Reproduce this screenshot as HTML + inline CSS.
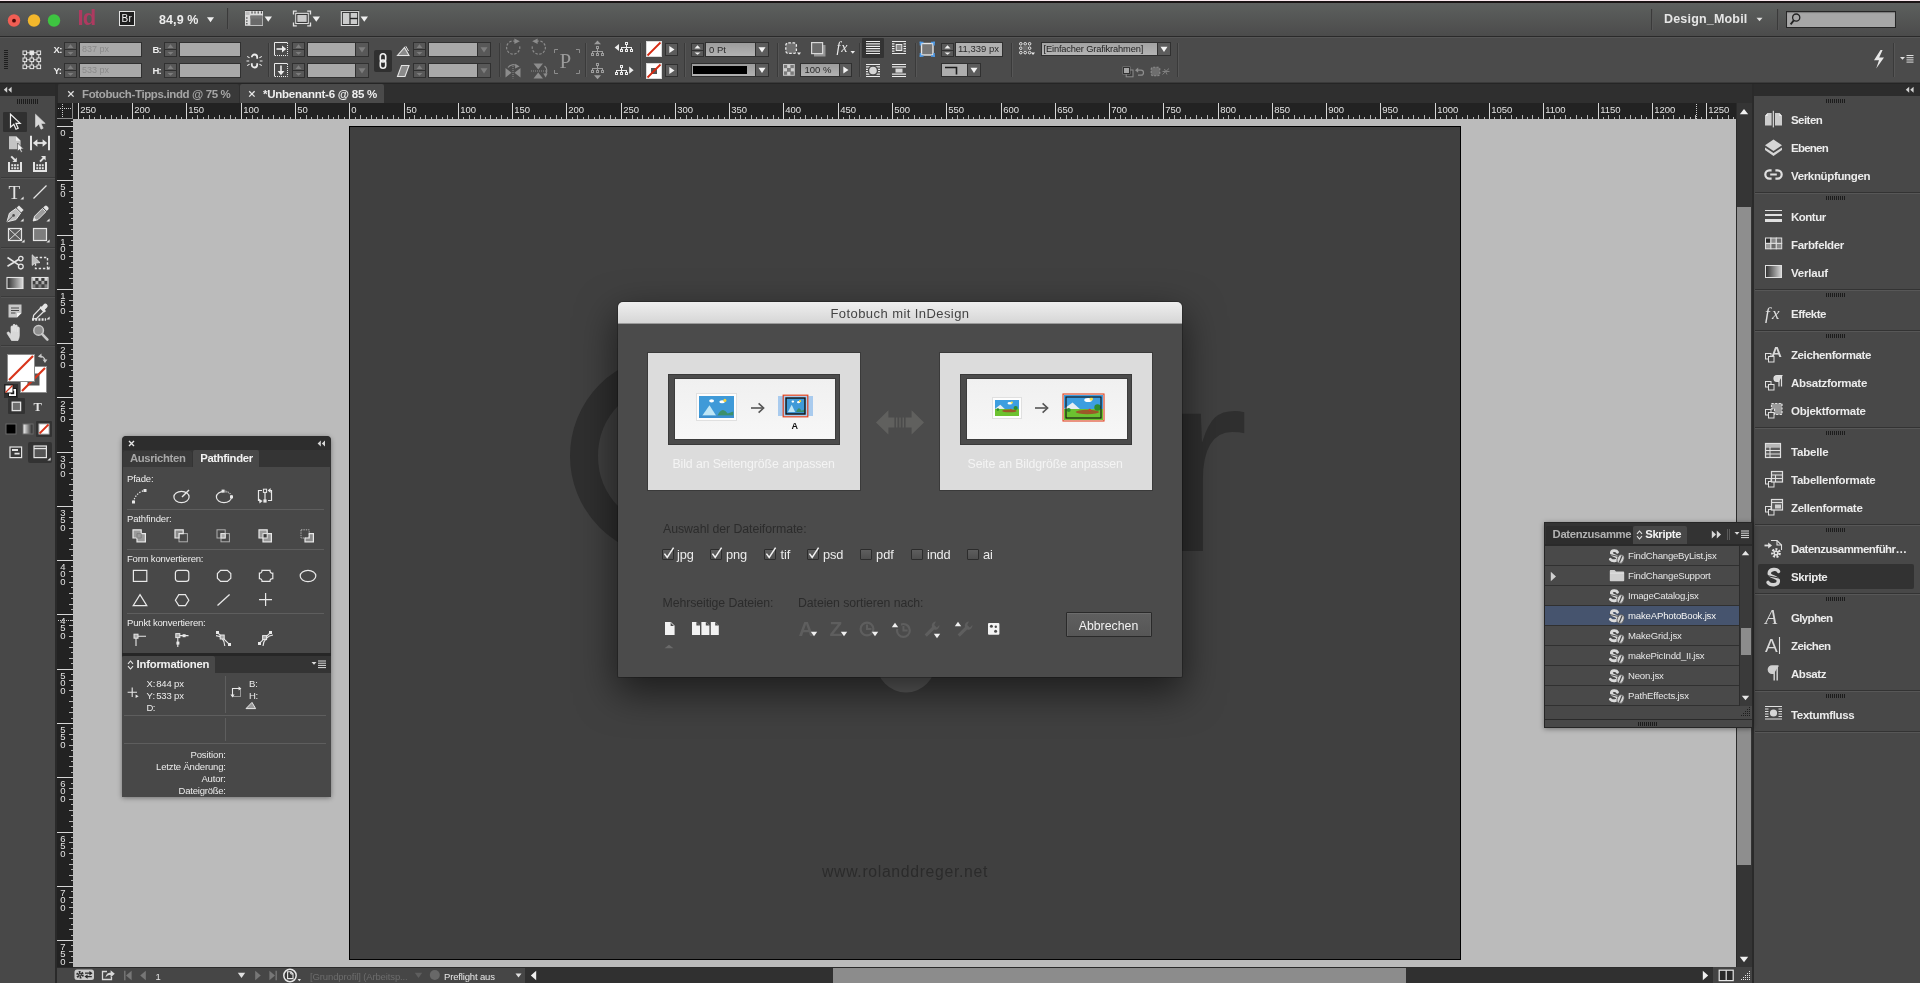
<!DOCTYPE html>
<html><head><meta charset="utf-8"><title>InDesign</title>
<style>
html,body{margin:0;padding:0}
body{width:1920px;height:983px;overflow:hidden;position:relative;background:#484848;font-family:"Liberation Sans",sans-serif}
body div,body span,body svg{position:absolute;box-sizing:border-box}
body span{white-space:pre;line-height:1}
#root{left:0;top:0;width:1920px;height:983px;overflow:hidden;will-change:transform}
</style></head><body><div id="root">
<div style="left:0px;top:0px;width:1920px;height:1px;background:#fbe9ee;"></div>
<div style="left:0px;top:1px;width:1920px;height:2px;background:#1b1415;"></div>
<div style="left:0px;top:3px;width:1920px;height:33px;background:linear-gradient(#5d605e,#4b4b4b);"></div>
<div style="left:0px;top:36px;width:1920px;height:1px;background:#2a2a2a;"></div>
<div style="left:0px;top:37px;width:1920px;height:46px;background:#4b4b4b;"></div>
<div style="left:0px;top:37px;width:1920px;height:1px;background:#565656;"></div>
<div style="left:0px;top:82px;width:1920px;height:1px;background:#3a3a3a;"></div>
<div style="left:0px;top:83px;width:1920px;height:1px;background:#252525;"></div>
<div style="left:0px;top:84px;width:1920px;height:19px;background:#2f2f2f;"></div>
<div style="left:0px;top:84px;width:55px;height:12px;background:#2c2c2c;"></div>
<div style="left:0px;top:96px;width:55px;height:887px;background:#484848;"></div>
<div style="left:55px;top:84px;width:3px;height:899px;background:#2a2a2a;"></div>
<div style="left:58px;top:84px;width:181px;height:19px;background:#393939;border-radius:2px 2px 0 0"></div>
<div style="left:240px;top:84px;width:144px;height:19px;background:#4a4a4a;border-radius:2px 2px 0 0"></div>
<div style="left:57px;top:103px;width:1679px;height:16px;background:#222222;"></div>
<div style="left:57px;top:119px;width:16px;height:848px;background:#222222;"></div>
<div style="left:73px;top:119px;width:1663px;height:848px;background:#bbbbbb;"></div>
<div style="left:349px;top:126px;width:1112px;height:834px;background:#404040;border:1px solid #000"></div>
<div style="left:1736px;top:103px;width:16px;height:864px;background:#353535;border-left:1px solid #2a2a2a"></div>
<div style="left:1737px;top:207px;width:14px;height:658px;background:#8e8e8e;"></div>
<div style="left:57px;top:967px;width:1695px;height:16px;background:#333333;"></div>
<div style="left:833px;top:968px;width:573px;height:15px;background:#8c8c8c;"></div>
<div style="left:1752px;top:84px;width:2px;height:899px;background:#2a2a2a;"></div>
<div style="left:1754px;top:84px;width:166px;height:12px;background:#2c2c2c;"></div>
<div style="left:1754px;top:96px;width:166px;height:887px;background:#484848;"></div>
<svg style="left:57px;top:103px;" width="1680" height="16" viewBox="0 0 1680 16"><g stroke="#d6d6d6" stroke-width="1" fill="none"><path d="M21.5 0V16"/><path d="M75.5 0V16"/><path d="M129.5 0V16"/><path d="M184.5 0V16"/><path d="M238.5 0V16"/><path d="M292.5 0V16"/><path d="M347.5 0V16"/><path d="M401.5 0V16"/><path d="M455.5 0V16"/><path d="M509.5 0V16"/><path d="M564.5 0V16"/><path d="M618.5 0V16"/><path d="M672.5 0V16"/><path d="M726.5 0V16"/><path d="M781.5 0V16"/><path d="M835.5 0V16"/><path d="M889.5 0V16"/><path d="M944.5 0V16"/><path d="M998.5 0V16"/><path d="M1052.5 0V16"/><path d="M1106.5 0V16"/><path d="M1161.5 0V16"/><path d="M1215.5 0V16"/><path d="M1269.5 0V16"/><path d="M1323.5 0V16"/><path d="M1378.5 0V16"/><path d="M1432.5 0V16"/><path d="M1486.5 0V16"/><path d="M1541.5 0V16"/><path d="M1595.5 0V16"/><path d="M1649.5 0V16"/></g><g stroke="#b4b4b4" stroke-width="1" fill="none"><path d="M26.5 14V16"/><path d="M32.5 12V16"/><path d="M37.5 14V16"/><path d="M43.5 12V16"/><path d="M48.5 14V16"/><path d="M54.5 12V16"/><path d="M59.5 14V16"/><path d="M64.5 12V16"/><path d="M70.5 14V16"/><path d="M81.5 14V16"/><path d="M86.5 12V16"/><path d="M92.5 14V16"/><path d="M97.5 12V16"/><path d="M102.5 14V16"/><path d="M108.5 12V16"/><path d="M113.5 14V16"/><path d="M119.5 12V16"/><path d="M124.5 14V16"/><path d="M135.5 14V16"/><path d="M140.5 12V16"/><path d="M146.5 14V16"/><path d="M151.5 12V16"/><path d="M157.5 14V16"/><path d="M162.5 12V16"/><path d="M167.5 14V16"/><path d="M173.5 12V16"/><path d="M178.5 14V16"/><path d="M189.5 14V16"/><path d="M195.5 12V16"/><path d="M200.5 14V16"/><path d="M205.5 12V16"/><path d="M211.5 14V16"/><path d="M216.5 12V16"/><path d="M222.5 14V16"/><path d="M227.5 12V16"/><path d="M233.5 14V16"/><path d="M243.5 14V16"/><path d="M249.5 12V16"/><path d="M254.5 14V16"/><path d="M260.5 12V16"/><path d="M265.5 14V16"/><path d="M271.5 12V16"/><path d="M276.5 14V16"/><path d="M281.5 12V16"/><path d="M287.5 14V16"/><path d="M298.5 14V16"/><path d="M303.5 12V16"/><path d="M309.5 14V16"/><path d="M314.5 12V16"/><path d="M319.5 14V16"/><path d="M325.5 12V16"/><path d="M330.5 14V16"/><path d="M336.5 12V16"/><path d="M341.5 14V16"/><path d="M352.5 14V16"/><path d="M357.5 12V16"/><path d="M363.5 14V16"/><path d="M368.5 12V16"/><path d="M374.5 14V16"/><path d="M379.5 12V16"/><path d="M385.5 14V16"/><path d="M390.5 12V16"/><path d="M395.5 14V16"/><path d="M406.5 14V16"/><path d="M412.5 12V16"/><path d="M417.5 14V16"/><path d="M423.5 12V16"/><path d="M428.5 14V16"/><path d="M433.5 12V16"/><path d="M439.5 14V16"/><path d="M444.5 12V16"/><path d="M450.5 14V16"/><path d="M461.5 14V16"/><path d="M466.5 12V16"/><path d="M471.5 14V16"/><path d="M477.5 12V16"/><path d="M482.5 14V16"/><path d="M488.5 12V16"/><path d="M493.5 14V16"/><path d="M499.5 12V16"/><path d="M504.5 14V16"/><path d="M515.5 14V16"/><path d="M520.5 12V16"/><path d="M526.5 14V16"/><path d="M531.5 12V16"/><path d="M537.5 14V16"/><path d="M542.5 12V16"/><path d="M547.5 14V16"/><path d="M553.5 12V16"/><path d="M558.5 14V16"/><path d="M569.5 14V16"/><path d="M575.5 12V16"/><path d="M580.5 14V16"/><path d="M585.5 12V16"/><path d="M591.5 14V16"/><path d="M596.5 12V16"/><path d="M602.5 14V16"/><path d="M607.5 12V16"/><path d="M612.5 14V16"/><path d="M623.5 14V16"/><path d="M629.5 12V16"/><path d="M634.5 14V16"/><path d="M640.5 12V16"/><path d="M645.5 14V16"/><path d="M650.5 12V16"/><path d="M656.5 14V16"/><path d="M661.5 12V16"/><path d="M667.5 14V16"/><path d="M678.5 14V16"/><path d="M683.5 12V16"/><path d="M688.5 14V16"/><path d="M694.5 12V16"/><path d="M699.5 14V16"/><path d="M705.5 12V16"/><path d="M710.5 14V16"/><path d="M716.5 12V16"/><path d="M721.5 14V16"/><path d="M732.5 14V16"/><path d="M737.5 12V16"/><path d="M743.5 14V16"/><path d="M748.5 12V16"/><path d="M754.5 14V16"/><path d="M759.5 12V16"/><path d="M764.5 14V16"/><path d="M770.5 12V16"/><path d="M775.5 14V16"/><path d="M786.5 14V16"/><path d="M792.5 12V16"/><path d="M797.5 14V16"/><path d="M802.5 12V16"/><path d="M808.5 14V16"/><path d="M813.5 12V16"/><path d="M819.5 14V16"/><path d="M824.5 12V16"/><path d="M830.5 14V16"/><path d="M840.5 14V16"/><path d="M846.5 12V16"/><path d="M851.5 14V16"/><path d="M857.5 12V16"/><path d="M862.5 14V16"/><path d="M868.5 12V16"/><path d="M873.5 14V16"/><path d="M878.5 12V16"/><path d="M884.5 14V16"/><path d="M895.5 14V16"/><path d="M900.5 12V16"/><path d="M906.5 14V16"/><path d="M911.5 12V16"/><path d="M916.5 14V16"/><path d="M922.5 12V16"/><path d="M927.5 14V16"/><path d="M933.5 12V16"/><path d="M938.5 14V16"/><path d="M949.5 14V16"/><path d="M954.5 12V16"/><path d="M960.5 14V16"/><path d="M965.5 12V16"/><path d="M971.5 14V16"/><path d="M976.5 12V16"/><path d="M982.5 14V16"/><path d="M987.5 12V16"/><path d="M992.5 14V16"/><path d="M1003.5 14V16"/><path d="M1009.5 12V16"/><path d="M1014.5 14V16"/><path d="M1020.5 12V16"/><path d="M1025.5 14V16"/><path d="M1030.5 12V16"/><path d="M1036.5 14V16"/><path d="M1041.5 12V16"/><path d="M1047.5 14V16"/><path d="M1058.5 14V16"/><path d="M1063.5 12V16"/><path d="M1068.5 14V16"/><path d="M1074.5 12V16"/><path d="M1079.5 14V16"/><path d="M1085.5 12V16"/><path d="M1090.5 14V16"/><path d="M1095.5 12V16"/><path d="M1101.5 14V16"/><path d="M1112.5 14V16"/><path d="M1117.5 12V16"/><path d="M1123.5 14V16"/><path d="M1128.5 12V16"/><path d="M1133.5 14V16"/><path d="M1139.5 12V16"/><path d="M1144.5 14V16"/><path d="M1150.5 12V16"/><path d="M1155.5 14V16"/><path d="M1166.5 14V16"/><path d="M1171.5 12V16"/><path d="M1177.5 14V16"/><path d="M1182.5 12V16"/><path d="M1188.5 14V16"/><path d="M1193.5 12V16"/><path d="M1199.5 14V16"/><path d="M1204.5 12V16"/><path d="M1209.5 14V16"/><path d="M1220.5 14V16"/><path d="M1226.5 12V16"/><path d="M1231.5 14V16"/><path d="M1237.5 12V16"/><path d="M1242.5 14V16"/><path d="M1247.5 12V16"/><path d="M1253.5 14V16"/><path d="M1258.5 12V16"/><path d="M1264.5 14V16"/><path d="M1275.5 14V16"/><path d="M1280.5 12V16"/><path d="M1285.5 14V16"/><path d="M1291.5 12V16"/><path d="M1296.5 14V16"/><path d="M1302.5 12V16"/><path d="M1307.5 14V16"/><path d="M1313.5 12V16"/><path d="M1318.5 14V16"/><path d="M1329.5 14V16"/><path d="M1334.5 12V16"/><path d="M1340.5 14V16"/><path d="M1345.5 12V16"/><path d="M1351.5 14V16"/><path d="M1356.5 12V16"/><path d="M1361.5 14V16"/><path d="M1367.5 12V16"/><path d="M1372.5 14V16"/><path d="M1383.5 14V16"/><path d="M1389.5 12V16"/><path d="M1394.5 14V16"/><path d="M1399.5 12V16"/><path d="M1405.5 14V16"/><path d="M1410.5 12V16"/><path d="M1416.5 14V16"/><path d="M1421.5 12V16"/><path d="M1427.5 14V16"/><path d="M1437.5 14V16"/><path d="M1443.5 12V16"/><path d="M1448.5 14V16"/><path d="M1454.5 12V16"/><path d="M1459.5 14V16"/><path d="M1465.5 12V16"/><path d="M1470.5 14V16"/><path d="M1475.5 12V16"/><path d="M1481.5 14V16"/><path d="M1492.5 14V16"/><path d="M1497.5 12V16"/><path d="M1503.5 14V16"/><path d="M1508.5 12V16"/><path d="M1513.5 14V16"/><path d="M1519.5 12V16"/><path d="M1524.5 14V16"/><path d="M1530.5 12V16"/><path d="M1535.5 14V16"/><path d="M1546.5 14V16"/><path d="M1551.5 12V16"/><path d="M1557.5 14V16"/><path d="M1562.5 12V16"/><path d="M1568.5 14V16"/><path d="M1573.5 12V16"/><path d="M1578.5 14V16"/><path d="M1584.5 12V16"/><path d="M1589.5 14V16"/><path d="M1600.5 14V16"/><path d="M1606.5 12V16"/><path d="M1611.5 14V16"/><path d="M1616.5 12V16"/><path d="M1622.5 14V16"/><path d="M1627.5 12V16"/><path d="M1633.5 14V16"/><path d="M1638.5 12V16"/><path d="M1644.5 14V16"/><path d="M1654.5 14V16"/><path d="M1660.5 12V16"/><path d="M1665.5 14V16"/><path d="M1671.5 12V16"/><path d="M1676.5 14V16"/></g></svg>
<span style="left:80.20px;top:105.16px;font-size:9.5px;color:#e2e2e2;">250</span>
<span style="left:134.20px;top:105.16px;font-size:9.5px;color:#e2e2e2;">200</span>
<span style="left:188.20px;top:105.16px;font-size:9.5px;color:#e2e2e2;">150</span>
<span style="left:243.20px;top:105.16px;font-size:9.5px;color:#e2e2e2;">100</span>
<span style="left:297.20px;top:105.16px;font-size:9.5px;color:#e2e2e2;">50</span>
<span style="left:351.20px;top:105.16px;font-size:9.5px;color:#e2e2e2;">0</span>
<span style="left:406.20px;top:105.16px;font-size:9.5px;color:#e2e2e2;">50</span>
<span style="left:460.20px;top:105.16px;font-size:9.5px;color:#e2e2e2;">100</span>
<span style="left:514.20px;top:105.16px;font-size:9.5px;color:#e2e2e2;">150</span>
<span style="left:568.20px;top:105.16px;font-size:9.5px;color:#e2e2e2;">200</span>
<span style="left:623.20px;top:105.16px;font-size:9.5px;color:#e2e2e2;">250</span>
<span style="left:677.20px;top:105.16px;font-size:9.5px;color:#e2e2e2;">300</span>
<span style="left:731.20px;top:105.16px;font-size:9.5px;color:#e2e2e2;">350</span>
<span style="left:785.20px;top:105.16px;font-size:9.5px;color:#e2e2e2;">400</span>
<span style="left:840.20px;top:105.16px;font-size:9.5px;color:#e2e2e2;">450</span>
<span style="left:894.20px;top:105.16px;font-size:9.5px;color:#e2e2e2;">500</span>
<span style="left:948.20px;top:105.16px;font-size:9.5px;color:#e2e2e2;">550</span>
<span style="left:1003.20px;top:105.16px;font-size:9.5px;color:#e2e2e2;">600</span>
<span style="left:1057.20px;top:105.16px;font-size:9.5px;color:#e2e2e2;">650</span>
<span style="left:1111.20px;top:105.16px;font-size:9.5px;color:#e2e2e2;">700</span>
<span style="left:1165.20px;top:105.16px;font-size:9.5px;color:#e2e2e2;">750</span>
<span style="left:1220.20px;top:105.16px;font-size:9.5px;color:#e2e2e2;">800</span>
<span style="left:1274.20px;top:105.16px;font-size:9.5px;color:#e2e2e2;">850</span>
<span style="left:1328.20px;top:105.16px;font-size:9.5px;color:#e2e2e2;">900</span>
<span style="left:1382.20px;top:105.16px;font-size:9.5px;color:#e2e2e2;">950</span>
<span style="left:1437.20px;top:105.16px;font-size:9.5px;color:#e2e2e2;">1000</span>
<span style="left:1491.20px;top:105.16px;font-size:9.5px;color:#e2e2e2;">1050</span>
<span style="left:1545.20px;top:105.16px;font-size:9.5px;color:#e2e2e2;">1100</span>
<span style="left:1600.20px;top:105.16px;font-size:9.5px;color:#e2e2e2;">1150</span>
<span style="left:1654.20px;top:105.16px;font-size:9.5px;color:#e2e2e2;">1200</span>
<span style="left:1708.20px;top:105.16px;font-size:9.5px;color:#e2e2e2;">1250</span>
<svg style="left:57px;top:103px;" width="16" height="16" viewBox="0 0 16 16"><g stroke="#cfcfcf" stroke-width="1" stroke-dasharray="1 1" fill="none"><path d="M5.5 1V15"/><path d="M1 5.5H15"/></g></svg>
<div style="left:72px;top:103px;width:1px;height:16px;background:#8a8a8a;"></div>
<div style="left:57px;top:118px;width:16px;height:1px;background:#8a8a8a;"></div>
<svg style="left:57px;top:119px;" width="16" height="848" viewBox="0 0 16 848"><g stroke="#d6d6d6" stroke-width="1" fill="none"><path d="M0 7.5H16"/><path d="M0 61.5H16"/><path d="M0 116.5H16"/><path d="M0 170.5H16"/><path d="M0 224.5H16"/><path d="M0 278.5H16"/><path d="M0 333.5H16"/><path d="M0 387.5H16"/><path d="M0 441.5H16"/><path d="M0 495.5H16"/><path d="M0 550.5H16"/><path d="M0 604.5H16"/><path d="M0 658.5H16"/><path d="M0 713.5H16"/><path d="M0 767.5H16"/><path d="M0 821.5H16"/></g><g stroke="#b4b4b4" stroke-width="1" fill="none"><path d="M14 2.5H16"/><path d="M14 12.5H16"/><path d="M12 18.5H16"/><path d="M14 23.5H16"/><path d="M12 29.5H16"/><path d="M14 34.5H16"/><path d="M12 40.5H16"/><path d="M14 45.5H16"/><path d="M12 50.5H16"/><path d="M14 56.5H16"/><path d="M14 67.5H16"/><path d="M12 72.5H16"/><path d="M14 78.5H16"/><path d="M12 83.5H16"/><path d="M14 88.5H16"/><path d="M12 94.5H16"/><path d="M14 99.5H16"/><path d="M12 105.5H16"/><path d="M14 110.5H16"/><path d="M14 121.5H16"/><path d="M12 126.5H16"/><path d="M14 132.5H16"/><path d="M12 137.5H16"/><path d="M14 143.5H16"/><path d="M12 148.5H16"/><path d="M14 154.5H16"/><path d="M12 159.5H16"/><path d="M14 164.5H16"/><path d="M14 175.5H16"/><path d="M12 181.5H16"/><path d="M14 186.5H16"/><path d="M12 192.5H16"/><path d="M14 197.5H16"/><path d="M12 202.5H16"/><path d="M14 208.5H16"/><path d="M12 213.5H16"/><path d="M14 219.5H16"/><path d="M14 230.5H16"/><path d="M12 235.5H16"/><path d="M14 240.5H16"/><path d="M12 246.5H16"/><path d="M14 251.5H16"/><path d="M12 257.5H16"/><path d="M14 262.5H16"/><path d="M12 267.5H16"/><path d="M14 273.5H16"/><path d="M14 284.5H16"/><path d="M12 289.5H16"/><path d="M14 295.5H16"/><path d="M12 300.5H16"/><path d="M14 305.5H16"/><path d="M12 311.5H16"/><path d="M14 316.5H16"/><path d="M12 322.5H16"/><path d="M14 327.5H16"/><path d="M14 338.5H16"/><path d="M12 343.5H16"/><path d="M14 349.5H16"/><path d="M12 354.5H16"/><path d="M14 360.5H16"/><path d="M12 365.5H16"/><path d="M14 371.5H16"/><path d="M12 376.5H16"/><path d="M14 381.5H16"/><path d="M14 392.5H16"/><path d="M12 398.5H16"/><path d="M14 403.5H16"/><path d="M12 409.5H16"/><path d="M14 414.5H16"/><path d="M12 419.5H16"/><path d="M14 425.5H16"/><path d="M12 430.5H16"/><path d="M14 436.5H16"/><path d="M14 447.5H16"/><path d="M12 452.5H16"/><path d="M14 457.5H16"/><path d="M12 463.5H16"/><path d="M14 468.5H16"/><path d="M12 474.5H16"/><path d="M14 479.5H16"/><path d="M12 485.5H16"/><path d="M14 490.5H16"/><path d="M14 501.5H16"/><path d="M12 506.5H16"/><path d="M14 512.5H16"/><path d="M12 517.5H16"/><path d="M14 523.5H16"/><path d="M12 528.5H16"/><path d="M14 533.5H16"/><path d="M12 539.5H16"/><path d="M14 544.5H16"/><path d="M14 555.5H16"/><path d="M12 561.5H16"/><path d="M14 566.5H16"/><path d="M12 571.5H16"/><path d="M14 577.5H16"/><path d="M12 582.5H16"/><path d="M14 588.5H16"/><path d="M12 593.5H16"/><path d="M14 599.5H16"/><path d="M14 609.5H16"/><path d="M12 615.5H16"/><path d="M14 620.5H16"/><path d="M12 626.5H16"/><path d="M14 631.5H16"/><path d="M12 637.5H16"/><path d="M14 642.5H16"/><path d="M12 647.5H16"/><path d="M14 653.5H16"/><path d="M14 664.5H16"/><path d="M12 669.5H16"/><path d="M14 675.5H16"/><path d="M12 680.5H16"/><path d="M14 685.5H16"/><path d="M12 691.5H16"/><path d="M14 696.5H16"/><path d="M12 702.5H16"/><path d="M14 707.5H16"/><path d="M14 718.5H16"/><path d="M12 723.5H16"/><path d="M14 729.5H16"/><path d="M12 734.5H16"/><path d="M14 740.5H16"/><path d="M12 745.5H16"/><path d="M14 750.5H16"/><path d="M12 756.5H16"/><path d="M14 761.5H16"/><path d="M14 772.5H16"/><path d="M12 778.5H16"/><path d="M14 783.5H16"/><path d="M12 788.5H16"/><path d="M14 794.5H16"/><path d="M12 799.5H16"/><path d="M14 805.5H16"/><path d="M12 810.5H16"/><path d="M14 816.5H16"/><path d="M14 826.5H16"/><path d="M12 832.5H16"/><path d="M14 837.5H16"/><path d="M12 843.5H16"/></g></svg>
<span style="left:60.20px;top:127.76px;font-size:9.5px;color:#e2e2e2;">0</span>
<span style="left:60.20px;top:181.76px;font-size:9.5px;color:#e2e2e2;">5</span>
<span style="left:60.20px;top:189.26px;font-size:9.5px;color:#e2e2e2;">0</span>
<span style="left:60.20px;top:236.76px;font-size:9.5px;color:#e2e2e2;">1</span>
<span style="left:60.20px;top:244.26px;font-size:9.5px;color:#e2e2e2;">0</span>
<span style="left:60.20px;top:251.76px;font-size:9.5px;color:#e2e2e2;">0</span>
<span style="left:60.20px;top:290.76px;font-size:9.5px;color:#e2e2e2;">1</span>
<span style="left:60.20px;top:298.26px;font-size:9.5px;color:#e2e2e2;">5</span>
<span style="left:60.20px;top:305.76px;font-size:9.5px;color:#e2e2e2;">0</span>
<span style="left:60.20px;top:344.76px;font-size:9.5px;color:#e2e2e2;">2</span>
<span style="left:60.20px;top:352.26px;font-size:9.5px;color:#e2e2e2;">0</span>
<span style="left:60.20px;top:359.76px;font-size:9.5px;color:#e2e2e2;">0</span>
<span style="left:60.20px;top:398.76px;font-size:9.5px;color:#e2e2e2;">2</span>
<span style="left:60.20px;top:406.26px;font-size:9.5px;color:#e2e2e2;">5</span>
<span style="left:60.20px;top:413.76px;font-size:9.5px;color:#e2e2e2;">0</span>
<span style="left:60.20px;top:453.76px;font-size:9.5px;color:#e2e2e2;">3</span>
<span style="left:60.20px;top:461.26px;font-size:9.5px;color:#e2e2e2;">0</span>
<span style="left:60.20px;top:468.76px;font-size:9.5px;color:#e2e2e2;">0</span>
<span style="left:60.20px;top:507.76px;font-size:9.5px;color:#e2e2e2;">3</span>
<span style="left:60.20px;top:515.26px;font-size:9.5px;color:#e2e2e2;">5</span>
<span style="left:60.20px;top:522.76px;font-size:9.5px;color:#e2e2e2;">0</span>
<span style="left:60.20px;top:561.76px;font-size:9.5px;color:#e2e2e2;">4</span>
<span style="left:60.20px;top:569.26px;font-size:9.5px;color:#e2e2e2;">0</span>
<span style="left:60.20px;top:576.76px;font-size:9.5px;color:#e2e2e2;">0</span>
<span style="left:60.20px;top:615.76px;font-size:9.5px;color:#e2e2e2;">4</span>
<span style="left:60.20px;top:623.26px;font-size:9.5px;color:#e2e2e2;">5</span>
<span style="left:60.20px;top:630.76px;font-size:9.5px;color:#e2e2e2;">0</span>
<span style="left:60.20px;top:670.76px;font-size:9.5px;color:#e2e2e2;">5</span>
<span style="left:60.20px;top:678.26px;font-size:9.5px;color:#e2e2e2;">0</span>
<span style="left:60.20px;top:685.76px;font-size:9.5px;color:#e2e2e2;">0</span>
<span style="left:60.20px;top:724.76px;font-size:9.5px;color:#e2e2e2;">5</span>
<span style="left:60.20px;top:732.26px;font-size:9.5px;color:#e2e2e2;">5</span>
<span style="left:60.20px;top:739.76px;font-size:9.5px;color:#e2e2e2;">0</span>
<span style="left:60.20px;top:778.76px;font-size:9.5px;color:#e2e2e2;">6</span>
<span style="left:60.20px;top:786.26px;font-size:9.5px;color:#e2e2e2;">0</span>
<span style="left:60.20px;top:793.76px;font-size:9.5px;color:#e2e2e2;">0</span>
<span style="left:60.20px;top:833.76px;font-size:9.5px;color:#e2e2e2;">6</span>
<span style="left:60.20px;top:841.26px;font-size:9.5px;color:#e2e2e2;">5</span>
<span style="left:60.20px;top:848.76px;font-size:9.5px;color:#e2e2e2;">0</span>
<span style="left:60.20px;top:887.76px;font-size:9.5px;color:#e2e2e2;">7</span>
<span style="left:60.20px;top:895.26px;font-size:9.5px;color:#e2e2e2;">0</span>
<span style="left:60.20px;top:902.76px;font-size:9.5px;color:#e2e2e2;">0</span>
<span style="left:60.20px;top:941.76px;font-size:9.5px;color:#e2e2e2;">7</span>
<span style="left:60.20px;top:949.26px;font-size:9.5px;color:#e2e2e2;">5</span>
<span style="left:60.20px;top:956.76px;font-size:9.5px;color:#e2e2e2;">0</span>
<svg style="left:5px;top:10.5px;" width="60" height="20" viewBox="0 0 60 20"><circle cx="9" cy="9.5" r="6.2" fill="#f15e54"/><circle cx="9" cy="9.7" r="1.9" fill="#4c0b08"/>
<circle cx="29" cy="9.5" r="6.2" fill="#f3b72c"/><circle cx="49" cy="9.5" r="6.2" fill="#3ec441"/></svg>
<span style="left:77.40px;top:7.08px;font-size:22px;color:#ae3a60;font-weight:bold;letter-spacing:-0.781px;">Id</span>
<div style="left:119px;top:11px;width:16px;height:15px;background:#1f1f1f;border:1px solid #e6e6e6"></div>
<span style="left:121.60px;top:14.14px;font-size:10px;color:#f0f0f0;letter-spacing:0.300px;">Br</span>
<span style="left:159.00px;top:13.82px;font-size:12.5px;color:#ececec;font-weight:bold;letter-spacing:0.096px;">84,9 %</span>
<svg style="left:206px;top:16px;" width="10" height="8" viewBox="0 0 10 8"><path d="M1 1.2H8L4.5 6.2Z" fill="#f0f0f0"/></svg>
<div style="left:227px;top:8px;width:1px;height:21px;background:#3a3a3a;"></div>
<div style="left:228px;top:8px;width:1px;height:21px;background:#565656;"></div>
<svg style="left:244px;top:10px;" width="30" height="18" viewBox="0 0 30 18"><rect x="1" y="0.8" width="18" height="15" fill="#dcdcdc"/><rect x="1" y="0.2" width="18" height="0.8" fill="#2c2c2c"/>
<rect x="6.4" y="5.6" width="12" height="9.4" fill="#6a6a6a"/><rect x="6.4" y="5.6" width="12" height="3" fill="#757575"/>
<rect x="1.6" y="1.6" width="4" height="3.4" fill="#bdbdbd"/>
<path d="M8 1.4V3.6M11 1.4V3.6M14.2 1.4V3.6M17.4 1.4V3.6" stroke="#222" stroke-width=".9"/><path d="M2 8H3.6M2 11H3.6M2 13.8H3.6" stroke="#222" stroke-width=".9"/>
<path d="M20.6 6.4H28L24.3 11.8Z" fill="#f0f0f0"/></svg>
<svg style="left:292px;top:10px;" width="30" height="18" viewBox="0 0 30 18"><path d="M1.5 4.6V1.2H4.8 M15.2 1.2H18.5V4.6 M18.5 12.4V15.8H15.2 M4.8 15.8H1.5V12.4" fill="none" stroke="#e4e4e4" stroke-width="1.3"/>
<rect x="3.2" y="2.8" width="13.6" height="11.2" fill="#dedede"/><rect x="4.3" y="3.9" width="11.4" height="9" fill="#262626"/><rect x="5.3" y="4.9" width="9.4" height="7" fill="#c9c9c9"/>
<path d="M20.6 6.4H28L24.3 11.8Z" fill="#f0f0f0"/></svg>
<svg style="left:340px;top:10px;" width="30" height="18" viewBox="0 0 30 18"><rect x="0.8" y="1" width="18.4" height="15" fill="#dedede"/><rect x="0.8" y="0.3" width="18.4" height="0.8" fill="#2c2c2c"/><rect x="1.9" y="2.1" width="16.2" height="12.8" fill="#262626"/>
<rect x="2.8" y="3" width="6.6" height="11" fill="#cbcbcb"/><rect x="10.6" y="3" width="6.6" height="4.8" fill="#cbcbcb"/><rect x="10.6" y="9.2" width="6.6" height="4.8" fill="#cbcbcb"/>
<path d="M20.6 6.4H28L24.3 11.8Z" fill="#f0f0f0"/></svg>
<div style="left:1651px;top:9px;width:1px;height:21px;background:#3a3a3a;"></div>
<div style="left:1652px;top:9px;width:1px;height:21px;background:#565656;"></div>
<span style="left:1664.00px;top:12.82px;font-size:12.5px;color:#e6e6e6;font-weight:bold;letter-spacing:0.186px;">Design_Mobil</span>
<svg style="left:1756px;top:17px;" width="8" height="5" viewBox="0 0 8 5"><path d="M0.5 0.8H6.5L3.5 4.2Z" fill="#e0e0e0"/></svg>
<div style="left:1777px;top:9px;width:1px;height:21px;background:#3a3a3a;"></div>
<div style="left:1778px;top:9px;width:1px;height:21px;background:#565656;"></div>
<div style="left:1786px;top:11px;width:110px;height:17px;background:#a7a7a7;border:1px solid #262626;box-shadow:inset 0 1px 1px #7a7a7a"></div>
<svg style="left:1789px;top:12px;" width="14" height="15" viewBox="0 0 14 15"><circle cx="7.2" cy="5.6" r="3.6" fill="none" stroke="#222" stroke-width="1.3"/><path d="M4.8 8.4L1.6 12.4" stroke="#222" stroke-width="1.8"/></svg>
<svg style="left:3px;top:49px;" width="6" height="22" viewBox="0 0 6 22"><path d="M1 1.5H5M1 3.5H5M1 5.5H5M1 7.5H5M1 9.5H5M1 11.5H5M1 13.5H5M1 15.5H5M1 17.5H5M1 19.5H5" stroke="#1e1e1e" stroke-width="1"/></svg>
<svg style="left:22px;top:50px;" width="21" height="21" viewBox="0 0 21 21"><rect x="1" y="1" width="3.6" height="3.6" fill="none" stroke="#e6e6e6" stroke-width="1"/><rect x="8" y="1" width="3.6" height="3.6" fill="#e6e6e6" stroke="#e6e6e6" stroke-width="1"/><rect x="15" y="1" width="3.6" height="3.6" fill="none" stroke="#e6e6e6" stroke-width="1"/><rect x="1" y="8" width="3.6" height="3.6" fill="none" stroke="#e6e6e6" stroke-width="1"/><rect x="8" y="8" width="3.6" height="3.6" fill="none" stroke="#e6e6e6" stroke-width="1"/><rect x="15" y="8" width="3.6" height="3.6" fill="none" stroke="#e6e6e6" stroke-width="1"/><rect x="1" y="15" width="3.6" height="3.6" fill="none" stroke="#e6e6e6" stroke-width="1"/><rect x="8" y="15" width="3.6" height="3.6" fill="none" stroke="#e6e6e6" stroke-width="1"/><rect x="15" y="15" width="3.6" height="3.6" fill="none" stroke="#e6e6e6" stroke-width="1"/><path d="M4.6 2.8H8M11.6 2.8H15M4.6 9.8H8M11.6 9.8H15M4.6 16.8H8M11.6 16.8H15M2.8 4.6V8M2.8 11.6V15M9.8 4.6V8M9.8 11.6V15M16.8 4.6V8M16.8 11.6V15" stroke="#e6e6e6" stroke-width="1"/></svg>
<span style="left:53.40px;top:44.96px;font-size:9.5px;color:#ececec;font-weight:bold;letter-spacing:-0.550px;">X:</span>
<span style="left:53.40px;top:65.96px;font-size:9.5px;color:#ececec;font-weight:bold;letter-spacing:-0.198px;">Y:</span>
<span style="left:152.40px;top:44.96px;font-size:9.5px;color:#ececec;font-weight:bold;letter-spacing:-0.816px;">B:</span>
<span style="left:152.40px;top:65.96px;font-size:9.5px;color:#ececec;font-weight:bold;letter-spacing:-0.816px;">H:</span>
<div style="left:64px;top:42px;width:13px;height:15px;background:#585858;border:1px solid #303030"></div>
<div style="left:64px;top:49px;width:13px;height:1px;background:#303030;"></div>
<svg style="left:64px;top:42px;" width="13" height="15" viewBox="0 0 13 15"><path d="M3.5 6.0L6.5 2.2L9.5 6.0Z M3.5 10.0L6.5 12.8L9.5 10.0Z" fill="#7d7d7d"/></svg>
<div style="left:79px;top:42px;width:63px;height:15px;background:#a9a9a9;border:1px solid #303030"></div>
<span style="left:82.00px;top:44.78px;font-size:9px;color:#8a8a8a;">837 px</span>
<div style="left:164px;top:42px;width:13px;height:15px;background:#585858;border:1px solid #303030"></div>
<div style="left:164px;top:49px;width:13px;height:1px;background:#303030;"></div>
<svg style="left:164px;top:42px;" width="13" height="15" viewBox="0 0 13 15"><path d="M3.5 6.0L6.5 2.2L9.5 6.0Z M3.5 10.0L6.5 12.8L9.5 10.0Z" fill="#7d7d7d"/></svg>
<div style="left:179px;top:42px;width:62px;height:15px;background:#a9a9a9;border:1px solid #303030"></div>
<div style="left:64px;top:63px;width:13px;height:15px;background:#585858;border:1px solid #303030"></div>
<div style="left:64px;top:70px;width:13px;height:1px;background:#303030;"></div>
<svg style="left:64px;top:63px;" width="13" height="15" viewBox="0 0 13 15"><path d="M3.5 6.0L6.5 2.2L9.5 6.0Z M3.5 10.0L6.5 12.8L9.5 10.0Z" fill="#7d7d7d"/></svg>
<div style="left:79px;top:63px;width:63px;height:15px;background:#a9a9a9;border:1px solid #303030"></div>
<span style="left:82.00px;top:65.78px;font-size:9px;color:#8a8a8a;">533 px</span>
<div style="left:164px;top:63px;width:13px;height:15px;background:#585858;border:1px solid #303030"></div>
<div style="left:164px;top:70px;width:13px;height:1px;background:#303030;"></div>
<svg style="left:164px;top:63px;" width="13" height="15" viewBox="0 0 13 15"><path d="M3.5 6.0L6.5 2.2L9.5 6.0Z M3.5 10.0L6.5 12.8L9.5 10.0Z" fill="#7d7d7d"/></svg>
<div style="left:179px;top:63px;width:62px;height:15px;background:#a9a9a9;border:1px solid #303030"></div>
<svg style="left:245px;top:52px;" width="19" height="18" viewBox="0 0 19 18"><path d="M6.8 5.2a2.7 2.7 0 0 1 5.4 0V6.8 M6.8 11.2V12.8a2.7 2.7 0 0 0 5.4 0V11.2" fill="none" stroke="#ececec" stroke-width="1.8"/>
<path d="M1.5 9H4.2M14.8 9H17.5M2.2 4.4L4.6 5.9M16.8 4.4L14.4 5.9M2.2 13.6L4.6 12.1M16.8 13.6L14.4 12.1" stroke="#ececec" stroke-width="1.1"/></svg>
<div style="left:268px;top:43px;width:1px;height:34px;background:#3a3a3a;"></div>
<div style="left:269px;top:43px;width:1px;height:34px;background:#565656;"></div>
<svg style="left:274px;top:42px;" width="14" height="14" viewBox="0 0 14 14"><path d="M0.5 13.5V0.5H13.5" fill="none" stroke="#ececec" stroke-width="1"/><path d="M13.5 1V13.5H0.5" fill="none" stroke="#ececec" stroke-width="1" stroke-dasharray="1 1"/><path d="M2.5 7H9.5" stroke="#ececec" stroke-width="1.6"/><path d="M8 3.6L12.2 7L8 10.4Z" fill="#ececec"/></svg>
<svg style="left:274px;top:63px;" width="14" height="14" viewBox="0 0 14 14"><path d="M0.5 13.5V0.5H13.5" fill="none" stroke="#ececec" stroke-width="1"/><path d="M13.5 1V13.5H0.5" fill="none" stroke="#ececec" stroke-width="1" stroke-dasharray="1 1"/><path d="M7 2.5V9.5" stroke="#ececec" stroke-width="1.6"/><path d="M3.6 8L7 12.2L10.4 8Z" fill="#ececec"/></svg>
<div style="left:292px;top:42px;width:13px;height:15px;background:#585858;border:1px solid #303030"></div>
<div style="left:292px;top:49px;width:13px;height:1px;background:#303030;"></div>
<svg style="left:292px;top:42px;" width="13" height="15" viewBox="0 0 13 15"><path d="M3.5 6.0L6.5 2.2L9.5 6.0Z M3.5 10.0L6.5 12.8L9.5 10.0Z" fill="#7d7d7d"/></svg>
<div style="left:307px;top:42px;width:49px;height:15px;background:#a9a9a9;border:1px solid #303030"></div>
<div style="left:355px;top:42px;width:14px;height:15px;background:#585858;border:1px solid #303030"></div>
<svg style="left:355px;top:42px;" width="14" height="15" viewBox="0 0 14 15"><path d="M3.5 5.3L10.5 5.3L7.0 10.5Z" fill="#7d7d7d"/></svg>
<div style="left:413px;top:42px;width:13px;height:15px;background:#585858;border:1px solid #303030"></div>
<div style="left:413px;top:49px;width:13px;height:1px;background:#303030;"></div>
<svg style="left:413px;top:42px;" width="13" height="15" viewBox="0 0 13 15"><path d="M3.5 6.0L6.5 2.2L9.5 6.0Z M3.5 10.0L6.5 12.8L9.5 10.0Z" fill="#7d7d7d"/></svg>
<div style="left:428px;top:42px;width:50px;height:15px;background:#a9a9a9;border:1px solid #303030"></div>
<div style="left:477px;top:42px;width:14px;height:15px;background:#585858;border:1px solid #303030"></div>
<svg style="left:477px;top:42px;" width="14" height="15" viewBox="0 0 14 15"><path d="M3.5 5.3L10.5 5.3L7.0 10.5Z" fill="#7d7d7d"/></svg>
<div style="left:292px;top:63px;width:13px;height:15px;background:#585858;border:1px solid #303030"></div>
<div style="left:292px;top:70px;width:13px;height:1px;background:#303030;"></div>
<svg style="left:292px;top:63px;" width="13" height="15" viewBox="0 0 13 15"><path d="M3.5 6.0L6.5 2.2L9.5 6.0Z M3.5 10.0L6.5 12.8L9.5 10.0Z" fill="#7d7d7d"/></svg>
<div style="left:307px;top:63px;width:49px;height:15px;background:#a9a9a9;border:1px solid #303030"></div>
<div style="left:355px;top:63px;width:14px;height:15px;background:#585858;border:1px solid #303030"></div>
<svg style="left:355px;top:63px;" width="14" height="15" viewBox="0 0 14 15"><path d="M3.5 5.3L10.5 5.3L7.0 10.5Z" fill="#7d7d7d"/></svg>
<div style="left:413px;top:63px;width:13px;height:15px;background:#585858;border:1px solid #303030"></div>
<div style="left:413px;top:70px;width:13px;height:1px;background:#303030;"></div>
<svg style="left:413px;top:63px;" width="13" height="15" viewBox="0 0 13 15"><path d="M3.5 6.0L6.5 2.2L9.5 6.0Z M3.5 10.0L6.5 12.8L9.5 10.0Z" fill="#7d7d7d"/></svg>
<div style="left:428px;top:63px;width:50px;height:15px;background:#a9a9a9;border:1px solid #303030"></div>
<div style="left:477px;top:63px;width:14px;height:15px;background:#585858;border:1px solid #303030"></div>
<svg style="left:477px;top:63px;" width="14" height="15" viewBox="0 0 14 15"><path d="M3.5 5.3L10.5 5.3L7.0 10.5Z" fill="#7d7d7d"/></svg>
<div style="left:374px;top:50px;width:18px;height:22px;background:#303030;border-radius:2px"></div>
<svg style="left:374px;top:50px;" width="18" height="22" viewBox="0 0 18 22"><rect x="6.3" y="3.8" width="5.4" height="8.2" rx="2.7" fill="none" stroke="#f2f2f2" stroke-width="1.6"/><rect x="6.3" y="10" width="5.4" height="8.2" rx="2.7" fill="none" stroke="#f2f2f2" stroke-width="1.6"/></svg>
<svg style="left:396px;top:44px;" width="15" height="14" viewBox="0 0 15 14"><path d="M1.5 11.5H13L8.5 3.5Z" fill="#8a8a8a" stroke="#e4e4e4" stroke-width="1.1"/><path d="M9.8 2.2L12.5 7" stroke="#e4e4e4" stroke-width="1"/></svg>
<svg style="left:396px;top:64px;" width="15" height="14" viewBox="0 0 15 14"><path d="M1.5 12.5L5.5 1.5H13L9 12.5Z" fill="#8a8a8a" stroke="#e4e4e4" stroke-width="1.1"/></svg>
<div style="left:499px;top:43px;width:1px;height:34px;background:#3a3a3a;"></div>
<div style="left:500px;top:43px;width:1px;height:34px;background:#565656;"></div>
<svg style="left:504px;top:38px;" width="19" height="19" viewBox="0 0 19 19"><path d="M11.5 3.4A6.6 6.6 0 1 0 15.6 8" fill="none" stroke="#8c8c8c" stroke-width="1.2" stroke-dasharray="2.4 1.6"/><path d="M10.4 0.6L15.8 3.2L10.4 6Z" fill="#8c8c8c"/></svg>
<svg style="left:529px;top:38px;" width="19" height="19" viewBox="0 0 19 19"><path d="M7.5 3.4A6.6 6.6 0 1 1 3.4 8" fill="none" stroke="#8c8c8c" stroke-width="1.2" stroke-dasharray="2.4 1.6"/><path d="M8.6 0.6L3.2 3.2L8.6 6Z" fill="#8c8c8c"/></svg>
<svg style="left:504px;top:62px;" width="18" height="18" viewBox="0 0 18 18"><path d="M1.5 6V15.5L7.5 10.7Z M16.5 6V15.5L10.5 10.7Z" fill="#8c8c8c"/><path d="M9 4V16.5" stroke="#8c8c8c" stroke-width="1" stroke-dasharray="1 1"/><path d="M4 5.5A6 6 0 0 1 13 4.2" fill="none" stroke="#8c8c8c" stroke-width="1.2"/><path d="M11.3 1.8L15.6 4.6L11 6.6Z" fill="#8c8c8c"/></svg>
<svg style="left:530px;top:62px;" width="18" height="18" viewBox="0 0 18 18"><path d="M3.5 1.5H13L8.2 7.5Z M3.5 16.5H13L8.2 10.5Z" fill="#8c8c8c"/><path d="M1 9H16" stroke="#8c8c8c" stroke-width="1" stroke-dasharray="1 1"/><path d="M14.5 4A6 6 0 0 1 15.8 12" fill="none" stroke="#8c8c8c" stroke-width="1.2"/><path d="M13.2 11.5L17.6 11.5L15.6 15.6Z" fill="#8c8c8c"/></svg>
<svg style="left:553px;top:48px;" width="28" height="27" viewBox="0 0 28 27"><path d="M1.5 5V1.5H5 M23 1.5H26.5V5 M26.5 22V25.5H23 M5 25.5H1.5V22" fill="none" stroke="#8c8c8c" stroke-width="1"/></svg>
<span style="left:559.60px;top:50.57px;font-size:21px;color:#9a9a9a;font-family:'Liberation Serif', serif;">P</span>
<div style="left:585px;top:43px;width:1px;height:34px;background:#3a3a3a;"></div>
<div style="left:586px;top:43px;width:1px;height:34px;background:#565656;"></div>
<svg style="left:591px;top:40px;" width="13" height="17" viewBox="0 0 13 17"><path d="M3 4.2H10L6.5 0.4Z" fill="#9c9c9c"/><g transform="translate(0,6)"><g fill="none" stroke="#9c9c9c" stroke-width="1"><rect x="5.5" y="0.5" width="2" height="2"/><path d="M6.5 3V5.5M1 5.5H12M1.5 5.5V7M6.5 5.5V7M11.5 5.5V7"/><rect x="0.5" y="7.5" width="2" height="2"/><rect x="5.5" y="7.5" width="2" height="2"/><rect x="10.5" y="7.5" width="2" height="2"/></g></g></svg>
<svg style="left:591px;top:63px;" width="13" height="17" viewBox="0 0 13 17"><g fill="none" stroke="#9c9c9c" stroke-width="1"><rect x="5.5" y="0.5" width="2" height="2"/><path d="M6.5 3V5.5M1 5.5H12M1.5 5.5V7M6.5 5.5V7M11.5 5.5V7"/><rect x="0.5" y="7.5" width="2" height="2"/><rect x="5.5" y="7.5" width="2" height="2"/><rect x="10.5" y="7.5" width="2" height="2"/></g><path d="M3 12.2H10L6.5 16.2Z" fill="#9c9c9c"/></svg>
<svg style="left:614px;top:42px;" width="20" height="11" viewBox="0 0 20 11"><path d="M0.6 5.5L5 2V9Z" fill="#ececec"/><g transform="translate(6,0)"><g fill="none" stroke="#ececec" stroke-width="1"><rect x="5.5" y="0.5" width="2" height="2"/><path d="M6.5 3V5.5M1 5.5H12M1.5 5.5V7M6.5 5.5V7M11.5 5.5V7"/><rect x="0.5" y="7.5" width="2" height="2"/><rect x="5.5" y="7.5" width="2" height="2"/><rect x="10.5" y="7.5" width="2" height="2"/></g></g></svg>
<svg style="left:615px;top:65px;" width="20" height="11" viewBox="0 0 20 11"><g fill="none" stroke="#ececec" stroke-width="1"><rect x="5.5" y="0.5" width="2" height="2"/><path d="M6.5 3V5.5M1 5.5H12M1.5 5.5V7M6.5 5.5V7M11.5 5.5V7"/><rect x="0.5" y="7.5" width="2" height="2"/><rect x="5.5" y="7.5" width="2" height="2"/><rect x="10.5" y="7.5" width="2" height="2"/></g><path d="M18.6 5.2L14.2 1.6V8.8Z" fill="#ececec"/></svg>
<div style="left:640px;top:43px;width:1px;height:34px;background:#3a3a3a;"></div>
<div style="left:641px;top:43px;width:1px;height:34px;background:#565656;"></div>
<div style="left:646px;top:41px;width:16px;height:16px;background:#ffffff;border:1px solid #d8d8d8"></div>
<svg style="left:646px;top:41px;" width="16" height="16" viewBox="0 0 16 16"><path d="M1.5 14.5L14.5 1.5" stroke="#d62a12" stroke-width="1.8"/></svg>
<div style="left:665px;top:43px;width:13px;height:13px;background:#5c5c5c;border:1px solid #303030"></div>
<svg style="left:665px;top:43px;" width="13" height="13" viewBox="0 0 13 13"><path d="M4.3 2.9L9.5 6.5L4.3 10.1Z" fill="#f4f4f4"/></svg>
<div style="left:646px;top:63px;width:16px;height:16px;background:#ffffff;border:1px solid #d8d8d8"></div>
<svg style="left:646px;top:63px;" width="16" height="16" viewBox="0 0 16 16"><rect x="5" y="5" width="6" height="6" fill="#565656"/><path d="M1.5 14.5L14.5 1.5" stroke="#d62a12" stroke-width="1.8"/></svg>
<div style="left:665px;top:64px;width:13px;height:13px;background:#5c5c5c;border:1px solid #303030"></div>
<svg style="left:665px;top:64px;" width="13" height="13" viewBox="0 0 13 13"><path d="M4.3 2.9L9.5 6.5L4.3 10.1Z" fill="#f4f4f4"/></svg>
<div style="left:684px;top:43px;width:1px;height:34px;background:#3a3a3a;"></div>
<div style="left:685px;top:43px;width:1px;height:34px;background:#565656;"></div>
<div style="left:691px;top:43px;width:13px;height:14px;background:#5a5a5a;border:1px solid #303030"></div>
<div style="left:691px;top:50px;width:13px;height:1px;background:#303030;"></div>
<svg style="left:691px;top:43px;" width="13" height="14" viewBox="0 0 13 14"><path d="M3.5 5.5L6.5 2.2L9.5 5.5Z M3.5 9.5L6.5 11.8L9.5 9.5Z" fill="#f0f0f0"/></svg>
<div style="left:705px;top:42px;width:51px;height:15px;background:linear-gradient(#9c9c9c,#b2b2b2);border:1px solid #303030"></div>
<span style="left:709.00px;top:45.16px;font-size:9.5px;color:#2a2a2a;">0 Pt</span>
<div style="left:755px;top:42px;width:14px;height:15px;background:#5c5c5c;border:1px solid #303030"></div>
<svg style="left:755px;top:42px;" width="14" height="15" viewBox="0 0 14 15"><path d="M3.5 5.3L10.5 5.3L7.0 10.5Z" fill="#f4f4f4"/></svg>
<div style="left:691px;top:63px;width:65px;height:14px;background:linear-gradient(#9c9c9c,#b2b2b2);border:1px solid #303030"></div>
<div style="left:693px;top:66px;width:54px;height:8px;background:#000;"></div>
<div style="left:755px;top:63px;width:14px;height:14px;background:#5c5c5c;border:1px solid #303030"></div>
<svg style="left:755px;top:63px;" width="14" height="14" viewBox="0 0 14 14"><path d="M3.5 4.8L10.5 4.8L7.0 10.0Z" fill="#f4f4f4"/></svg>
<div style="left:777px;top:43px;width:1px;height:34px;background:#3a3a3a;"></div>
<div style="left:778px;top:43px;width:1px;height:34px;background:#565656;"></div>
<svg style="left:784px;top:41px;" width="18" height="16" viewBox="0 0 18 16"><rect x="1.8" y="1.8" width="10.6" height="10.6" rx="2.5" fill="#707070" stroke="#ececec" stroke-width="1.3" stroke-dasharray="2.6 1.6"/><path d="M13 11.5H17L15 14Z" fill="#ececec"/></svg>
<svg style="left:810px;top:41px;" width="17" height="16" viewBox="0 0 17 16"><rect x="4" y="4" width="11.5" height="11.5" fill="#cfcfcf" opacity=".55"/><rect x="1.6" y="1.6" width="11" height="11" fill="#6c6c6c" stroke="#d8d8d8" stroke-width="1.2"/></svg>
<span style="left:836.50px;top:41.38px;font-size:14px;color:#ececec;font-style:italic;font-family:'Liberation Serif', serif;letter-spacing:0.945px;">fx</span>
<svg style="left:850px;top:50px;" width="6" height="5" viewBox="0 0 6 5"><path d="M0.5 1H5L2.8 3.8Z" fill="#ececec"/></svg>
<svg style="left:783px;top:64px;" width="12" height="12" viewBox="0 0 12 12"><rect x="0.5" y="0.5" width="3.6" height="3.6" fill="#7a7a7a"/><rect x="4.1" y="0.5" width="3.6" height="3.6" fill="#d0d0d0"/><rect x="7.7" y="0.5" width="3.6" height="3.6" fill="#7a7a7a"/><rect x="0.5" y="4.1" width="3.6" height="3.6" fill="#d0d0d0"/><rect x="4.1" y="4.1" width="3.6" height="3.6" fill="#7a7a7a"/><rect x="7.7" y="4.1" width="3.6" height="3.6" fill="#d0d0d0"/><rect x="0.5" y="7.7" width="3.6" height="3.6" fill="#7a7a7a"/><rect x="4.1" y="7.7" width="3.6" height="3.6" fill="#d0d0d0"/><rect x="7.7" y="7.7" width="3.6" height="3.6" fill="#7a7a7a"/><rect x="0.5" y="0.5" width="10.8" height="10.8" fill="none" stroke="#c6c6c6" stroke-width="1"/></svg>
<div style="left:800px;top:63px;width:40px;height:14px;background:linear-gradient(#9c9c9c,#b2b2b2);border:1px solid #303030"></div>
<span style="left:804.50px;top:65.16px;font-size:9.5px;color:#2a2a2a;">100 %</span>
<div style="left:839px;top:63px;width:13px;height:14px;background:#5c5c5c;border:1px solid #303030"></div>
<svg style="left:839px;top:63px;" width="13" height="14" viewBox="0 0 13 14"><path d="M4.3 3.4L9.5 7.0L4.3 10.6Z" fill="#f4f4f4"/></svg>
<div style="left:859px;top:43px;width:1px;height:34px;background:#3a3a3a;"></div>
<div style="left:860px;top:43px;width:1px;height:34px;background:#565656;"></div>
<div style="left:862px;top:38px;width:22px;height:20px;background:#333333;border-radius:1px"></div>
<svg style="left:865px;top:40px;" width="16" height="16" viewBox="0 0 16 16"><path d="M1 1.5H15M1 3.9H15M1 6.3H15M1 8.7H15M1 11.1H15M1 13.5H15" stroke="#ececec" stroke-width="1.2"/></svg>
<svg style="left:891px;top:40px;" width="16" height="16" viewBox="0 0 16 16"><path d="M1 1.5H15M1 3.9H15M1 6.3H15M1 8.7H15M1 11.1H15M1 13.5H15" stroke="#ececec" stroke-width="1.2"/><rect x="3.5" y="2.7" width="9" height="9.6" fill="#4b4b4b"/><rect x="5.2" y="4.5" width="5.6" height="6" fill="#8a8a8a" stroke="#ececec" stroke-width="1"/></svg>
<svg style="left:865px;top:63px;" width="16" height="16" viewBox="0 0 16 16"><path d="M1 1.5H15M1 3.9H15M1 6.3H15M1 8.7H15M1 11.1H15M1 13.5H15" stroke="#ececec" stroke-width="1.2"/><circle cx="8" cy="7.5" r="5.2" fill="#4b4b4b"/><circle cx="8" cy="7.5" r="3.8" fill="#d6d6d6"/></svg>
<svg style="left:891px;top:63px;" width="16" height="16" viewBox="0 0 16 16"><path d="M1 1.5H15M1 3.9H15M1 11.1H15M1 13.5H15" stroke="#ececec" stroke-width="1.2"/><rect x="4.5" y="5.6" width="7" height="4" fill="#d6d6d6"/></svg>
<div style="left:915px;top:43px;width:1px;height:34px;background:#3a3a3a;"></div>
<div style="left:916px;top:43px;width:1px;height:34px;background:#565656;"></div>
<svg style="left:919px;top:41px;" width="17" height="17" viewBox="0 0 17 17"><rect x="2.5" y="2.5" width="11.5" height="11.5" fill="#777" stroke="#e6e6e6" stroke-width="1.4"/><path d="M0.5 1.5H4.5M1.5 0.5V4.5 M12 1.5H16M15 0.5V4.5 M0.5 15H4.5M1.5 12V16 M12 15H16M15 12V16" stroke="#4f9be8" stroke-width="1.6"/></svg>
<div style="left:941px;top:43px;width:13px;height:14px;background:#5a5a5a;border:1px solid #303030"></div>
<div style="left:941px;top:50px;width:13px;height:1px;background:#303030;"></div>
<svg style="left:941px;top:43px;" width="13" height="14" viewBox="0 0 13 14"><path d="M3.5 5.5L6.5 2.2L9.5 5.5Z M3.5 9.5L6.5 11.8L9.5 9.5Z" fill="#f0f0f0"/></svg>
<div style="left:955px;top:42px;width:48px;height:15px;background:#b0b0b0;border:1px solid #303030"></div>
<span style="left:958.00px;top:44.36px;font-size:9.5px;color:#2a2a2a;">11,339 px</span>
<div style="left:941px;top:63px;width:27px;height:14px;background:#adadad;border:1px solid #303030"></div>
<svg style="left:941px;top:63px;" width="27" height="14" viewBox="0 0 27 14"><path d="M4 4.5H15.5V11.5" fill="none" stroke="#1c1c1c" stroke-width="1.6"/></svg>
<div style="left:967px;top:63px;width:14px;height:14px;background:#5c5c5c;border:1px solid #303030"></div>
<svg style="left:967px;top:63px;" width="14" height="14" viewBox="0 0 14 14"><path d="M3.5 4.8L10.5 4.8L7.0 10.0Z" fill="#f4f4f4"/></svg>
<div style="left:1011px;top:43px;width:1px;height:34px;background:#3a3a3a;"></div>
<div style="left:1012px;top:43px;width:1px;height:34px;background:#565656;"></div>
<svg style="left:1019px;top:42px;" width="17" height="15" viewBox="0 0 17 15"><circle cx="1.8" cy="1.8" r="1.3" fill="none" stroke="#ececec" stroke-width="1"/><circle cx="6.2" cy="1.8" r="1.3" fill="none" stroke="#ececec" stroke-width="1"/><circle cx="10.6" cy="1.8" r="1.3" fill="none" stroke="#ececec" stroke-width="1"/><circle cx="1.8" cy="6.2" r="1.3" fill="none" stroke="#ececec" stroke-width="1"/><circle cx="10.6" cy="6.2" r="1.3" fill="none" stroke="#ececec" stroke-width="1"/><circle cx="1.8" cy="10.6" r="1.3" fill="none" stroke="#ececec" stroke-width="1"/><circle cx="6.2" cy="10.6" r="1.3" fill="none" stroke="#ececec" stroke-width="1"/><circle cx="10.6" cy="10.6" r="1.3" fill="none" stroke="#ececec" stroke-width="1"/><rect x="3.5" y="3.5" width="5.4" height="5.4" fill="#6a6a6a"/><path d="M12 10.5H16L14 13Z" fill="#ececec"/></svg>
<div style="left:1041px;top:42px;width:117px;height:14px;background:linear-gradient(#a2a2a2,#b4b4b4);border:1px solid #303030"></div>
<span style="left:1043.50px;top:44.83px;font-size:9.3px;color:#1e1e1e;letter-spacing:-0.156px;">[Einfacher Grafikrahmen]</span>
<div style="left:1157px;top:42px;width:14px;height:14px;background:#5c5c5c;border:1px solid #303030"></div>
<svg style="left:1157px;top:42px;" width="14" height="14" viewBox="0 0 14 14"><path d="M3.5 4.8L10.5 4.8L7.0 10.0Z" fill="#f4f4f4"/></svg>
<svg style="left:1122px;top:66px;" width="24" height="12" viewBox="0 0 24 12"><rect x="4.2" y="4" width="6.8" height="6.8" fill="#3c3c3c" stroke="#8e8e8e" stroke-width="1"/><rect x="0.6" y="0.6" width="7.8" height="7.8" fill="#8e8e8e"/><rect x="1.5" y="1.5" width="6" height="6" fill="#a6a6a6" stroke="#303030" stroke-width="1"/><path d="M15 4.2H19a2.5 2.5 0 0 1 0 5H16" fill="none" stroke="#8e8e8e" stroke-width="1.2"/><path d="M16.2 1.6L13 4.2L16.2 6.8Z" fill="#8e8e8e"/></svg>
<svg style="left:1150px;top:66px;" width="22" height="12" viewBox="0 0 22 12"><rect x="1.2" y="1.2" width="8.6" height="8.6" rx="2" fill="#6e6e6e" stroke="#8e8e8e" stroke-width="1.1" stroke-dasharray="2 1.3"/><path d="M12.5 8.5L19 2.5M14.5 3L17 8.5M12.5 5.5H19.5" stroke="#808080" stroke-width="1"/></svg>
<div style="left:1177px;top:43px;width:1px;height:34px;background:#3a3a3a;"></div>
<div style="left:1178px;top:43px;width:1px;height:34px;background:#565656;"></div>
<svg style="left:1871px;top:49px;" width="16" height="21" viewBox="0 0 16 21"><path d="M9.5 1L3 11.2H8L5.2 19.6L13 8.4H8.2L11.6 1Z" fill="#e8e8e8"/></svg>
<div style="left:1893px;top:43px;width:1px;height:34px;background:#3a3a3a;"></div>
<div style="left:1894px;top:43px;width:1px;height:34px;background:#565656;"></div>
<svg style="left:1899px;top:54px;" width="16" height="10" viewBox="0 0 16 10"><path d="M1 3H6L3.5 5.8Z" fill="#e0e0e0"/><path d="M7.5 1.5H14.5M7.5 3.7H14.5M7.5 5.9H14.5M7.5 8.1H14.5" stroke="#e0e0e0" stroke-width="1"/></svg>
<svg style="left:3px;top:86px;" width="10" height="8" viewBox="0 0 10 8"><path d="M4.2 0.8V6.8L0.8 3.8Z M8.6 0.8V6.8L5.2 3.8Z" fill="#d2d2d2"/></svg>
<svg style="left:1905px;top:86px;" width="10" height="8" viewBox="0 0 10 8"><path d="M4.2 0.8V6.8L0.8 3.8Z M8.6 0.8V6.8L5.2 3.8Z" fill="#d2d2d2"/></svg>
<svg style="left:67px;top:90px;" width="8" height="8" viewBox="0 0 8 8"><path d="M1.2 1.2L6.6 6.6M6.6 1.2L1.2 6.6" stroke="#e0e0e0" stroke-width="1.3"/></svg>
<span style="left:82.00px;top:88.87px;font-size:11.5px;color:#a6a6a6;font-weight:bold;letter-spacing:-0.364px;">Fotobuch-Tipps.indd @ 75 %</span>
<svg style="left:248px;top:90px;" width="8" height="8" viewBox="0 0 8 8"><path d="M1.2 1.2L6.6 6.6M6.6 1.2L1.2 6.6" stroke="#e8e8e8" stroke-width="1.3"/></svg>
<span style="left:263.00px;top:88.87px;font-size:11.5px;color:#efefef;font-weight:bold;letter-spacing:-0.241px;">*Unbenannt-6 @ 85 %</span>
<svg style="left:17px;top:99px;" width="22" height="5" viewBox="0 0 22 5"><path d="M0.5 0V5M2.5 0V5M4.5 0V5M6.5 0V5M8.5 0V5M10.5 0V5M12.5 0V5M14.5 0V5M16.5 0V5M18.5 0V5M20.5 0V5" stroke="#1c1c1c" stroke-width="1"/></svg>
<div style="left:3px;top:112px;width:24px;height:20px;background:#303030;border-radius:1px"></div>
<svg style="left:9px;top:113px;" width="13" height="18" viewBox="0 0 13 18"><path d="M1.5 1.2V14.2L4.8 11.2L7 16.2L9.2 15.2L7 10.4H11.2Z" fill="#2a2a2a" stroke="#f0f0f0" stroke-width="1.2" stroke-linejoin="miter"/></svg>
<svg style="left:34px;top:113px;" width="13" height="18" viewBox="0 0 13 18"><path d="M1.5 1.2V14.2L4.8 11.2L7 16.2L9.2 15.2L7 10.4H11.2Z" fill="#d8d8d8" stroke="#d8d8d8" stroke-width=".6"/></svg>
<svg style="left:8px;top:135px;" width="17" height="18" viewBox="0 0 17 18"><path d="M1 1.2H8L12.6 5.8V14.2H1Z" fill="#c4c4c4"/><path d="M8 1.2V5.8H12.6Z" fill="#ededed"/><path d="M9.6 8V16.2L11.6 14.6L13 17.4L14.4 16.6L13 14H15.6Z" fill="#f4f4f4" stroke="#484848" stroke-width=".7"/></svg>
<svg style="left:29px;top:135px;" width="22" height="16" viewBox="0 0 22 16"><path d="M2 0.8V15.2M20 0.8V15.2" stroke="#e4e4e4" stroke-width="2"/><path d="M6.5 8H15.5" stroke="#e4e4e4" stroke-width="1.8"/><path d="M8.4 4.2L3.8 8L8.4 11.8Z M13.6 4.2L18.2 8L13.6 11.8Z" fill="#e4e4e4"/></svg>
<svg style="left:7px;top:155px;" width="17" height="18" viewBox="0 0 17 18"><path d="M2 7V16H14V7" fill="none" stroke="#e4e4e4" stroke-width="2"/><path d="M4.3 10.2H6.2M7.05 10.2H8.95M9.8 10.2H11.7M4.3 13.2H6.2M7.05 13.2H8.95M9.8 13.2H11.7" stroke="#e4e4e4" stroke-width="2"/><path d="M4.2 1.4L8.2 5.4" stroke="#e4e4e4" stroke-width="2"/><path d="M9.8 2.6V7H5.4Z" fill="#e4e4e4"/></svg>
<svg style="left:32px;top:155px;" width="17" height="18" viewBox="0 0 17 18"><path d="M2 7V16H14V7" fill="none" stroke="#e4e4e4" stroke-width="2"/><path d="M4.3 10.2H6.2M7.05 10.2H8.95M9.8 10.2H11.7M4.3 13.2H6.2M7.05 13.2H8.95M9.8 13.2H11.7" stroke="#e4e4e4" stroke-width="2"/><path d="M8 6.6L12 2.6" stroke="#e4e4e4" stroke-width="2"/><path d="M9 1H13.6V5.6Z" fill="#e4e4e4"/></svg>
<div style="left:1px;top:177px;width:54px;height:1px;background:#3a3a3a;"></div>
<div style="left:1px;top:178px;width:54px;height:1px;background:#535353;"></div>
<span style="left:8.50px;top:182.83px;font-size:19px;color:#e4e4e4;font-family:'Liberation Serif', serif;">T</span>
<svg style="left:20px;top:196px;" width="4" height="4" viewBox="0 0 4 4"><path d="M3.6 0.4V3.6H0.4Z" fill="#e4e4e4"/></svg>
<svg style="left:32px;top:184px;" width="16" height="16" viewBox="0 0 16 16"><path d="M1.5 14.5L14.5 1.5" stroke="#e4e4e4" stroke-width="1.3"/></svg>
<svg style="left:6px;top:204px;" width="19" height="19" viewBox="0 0 19 19"><path d="M1 17.8L3.4 9.2L9.8 4.6L14.6 9.2L10 15.6Z" fill="#bdbdbd" stroke="#e4e4e4" stroke-width="1"/><path d="M10.6 3.8L13 1.4L17.6 6L15.2 8.4Z" fill="#e4e4e4"/><circle cx="7.6" cy="11.4" r="1.3" fill="#4a4a4a"/><path d="M1.2 17.6L6.8 12" stroke="#4a4a4a" stroke-width="0.9"/></svg>
<svg style="left:20px;top:218px;" width="4" height="4" viewBox="0 0 4 4"><path d="M3.6 0.4V3.6H0.4Z" fill="#e4e4e4"/></svg>
<svg style="left:31px;top:204px;" width="19" height="19" viewBox="0 0 19 19"><path d="M2.2 17L3.6 12.2L11.4 4.4L14.8 7.8L7 15.6Z" fill="#9c9c9c" stroke="#e4e4e4" stroke-width="1"/><path d="M12.2 3.6L13.8 2A1.6 1.6 0 0 1 16 2L17.2 3.2A1.6 1.6 0 0 1 17.2 5.4L15.6 7Z" fill="#e4e4e4"/><path d="M2.2 17L3.2 13.6L5.6 16Z" fill="#e8e8e8"/></svg>
<svg style="left:46px;top:218px;" width="4" height="4" viewBox="0 0 4 4"><path d="M3.6 0.4V3.6H0.4Z" fill="#e4e4e4"/></svg>
<svg style="left:7px;top:227px;" width="16" height="15" viewBox="0 0 16 15"><rect x="1.5" y="1.5" width="13" height="12" fill="#5a5a5a" stroke="#e4e4e4" stroke-width="1.2"/><path d="M1.5 1.5L14.5 13.5M14.5 1.5L1.5 13.5" stroke="#e4e4e4" stroke-width="1"/></svg>
<svg style="left:21px;top:239px;" width="4" height="4" viewBox="0 0 4 4"><path d="M3.6 0.4V3.6H0.4Z" fill="#e4e4e4"/></svg>
<svg style="left:32px;top:227px;" width="16" height="15" viewBox="0 0 16 15"><rect x="1.5" y="1.5" width="13" height="12" fill="#7d7d7d" stroke="#e4e4e4" stroke-width="1.2"/></svg>
<svg style="left:46px;top:239px;" width="4" height="4" viewBox="0 0 4 4"><path d="M3.6 0.4V3.6H0.4Z" fill="#e4e4e4"/></svg>
<div style="left:1px;top:247px;width:54px;height:1px;background:#3a3a3a;"></div>
<div style="left:1px;top:248px;width:54px;height:1px;background:#535353;"></div>
<svg style="left:6px;top:254px;" width="19" height="18" viewBox="0 0 19 18"><path d="M1.5 3.5L13 11.2M1.5 12.2L13 5.2" stroke="#e4e4e4" stroke-width="1.6"/><circle cx="14.8" cy="4.6" r="2.2" fill="none" stroke="#e4e4e4" stroke-width="1.3"/><circle cx="14.8" cy="12.6" r="2.4" fill="none" stroke="#e4e4e4" stroke-width="1.3"/></svg>
<svg style="left:31px;top:254px;" width="19" height="18" viewBox="0 0 19 18"><rect x="4.5" y="3.5" width="12" height="11" fill="none" stroke="#e4e4e4" stroke-width="1.4" stroke-dasharray="2.4 1.8"/><path d="M1.2 0.8V11.4L4 9L9 8.6Z" fill="#bcbcbc" stroke="#e4e4e4" stroke-width=".8"/></svg>
<svg style="left:46px;top:266px;" width="4" height="4" viewBox="0 0 4 4"><path d="M3.6 0.4V3.6H0.4Z" fill="#e4e4e4"/></svg>
<svg style="left:6px;top:276px" width="18" height="14" viewBox="0 0 18 14"><defs><linearGradient id="tg1"><stop offset="0" stop-color="#2e2e2e"/><stop offset="1" stop-color="#dcdcdc"/></linearGradient></defs><rect x="1" y="1.5" width="16" height="11" fill="url(#tg1)" stroke="#e4e4e4" stroke-width="1.1"/></svg>
<svg style="left:31px;top:276px;" width="18" height="14" viewBox="0 0 18 14"><rect x="1.5" y="1.5" width="3" height="3.4" fill="#d8d8d8" opacity="1.0"/><rect x="4.5" y="1.5" width="3" height="3.4" fill="#3a3a3a" opacity="1.0"/><rect x="7.5" y="1.5" width="3" height="3.4" fill="#d8d8d8" opacity="1.0"/><rect x="10.5" y="1.5" width="3" height="3.4" fill="#3a3a3a" opacity="1.0"/><rect x="13.5" y="1.5" width="3" height="3.4" fill="#d8d8d8" opacity="1.0"/><rect x="1.5" y="4.9" width="3" height="3.4" fill="#3a3a3a" opacity="0.7"/><rect x="4.5" y="4.9" width="3" height="3.4" fill="#d8d8d8" opacity="0.7"/><rect x="7.5" y="4.9" width="3" height="3.4" fill="#3a3a3a" opacity="0.7"/><rect x="10.5" y="4.9" width="3" height="3.4" fill="#d8d8d8" opacity="0.7"/><rect x="13.5" y="4.9" width="3" height="3.4" fill="#3a3a3a" opacity="0.7"/><rect x="1.5" y="8.3" width="3" height="3.4" fill="#d8d8d8" opacity="0.4"/><rect x="4.5" y="8.3" width="3" height="3.4" fill="#3a3a3a" opacity="0.4"/><rect x="7.5" y="8.3" width="3" height="3.4" fill="#d8d8d8" opacity="0.4"/><rect x="10.5" y="8.3" width="3" height="3.4" fill="#3a3a3a" opacity="0.4"/><rect x="13.5" y="8.3" width="3" height="3.4" fill="#d8d8d8" opacity="0.4"/><rect x="1" y="1.5" width="16" height="11" fill="none" stroke="#e4e4e4" stroke-width="1.1"/></svg>
<div style="left:1px;top:296px;width:54px;height:1px;background:#3a3a3a;"></div>
<div style="left:1px;top:297px;width:54px;height:1px;background:#535353;"></div>
<svg style="left:7px;top:303px;" width="17" height="17" viewBox="0 0 17 17"><path d="M1.5 1.5H14.5V10L10 14.5H1.5Z" fill="#c8c8c8"/><path d="M14.5 10H10V14.5Z" fill="#f4f4f4"/><path d="M4 5H12M4 7.5H12M4 10H8.5" stroke="#484848" stroke-width="1.1"/></svg>
<svg style="left:30px;top:302px;" width="20" height="19" viewBox="0 0 20 19"><path d="M10.5 6.2L13.8 9.5L6.6 16.4L3 17L3.6 13.4Z" fill="none" stroke="#e4e4e4" stroke-width="1.2"/><path d="M11.6 4.8L13.6 2.4A2.3 2.3 0 0 1 17 5.6L14.8 7.8L16 9L14.6 10.4L9.6 5.4L11 4Z" fill="#e4e4e4"/><path d="M2 17.5H16" stroke="#e4e4e4" stroke-width="2.4" stroke-dasharray="2 1.2"/></svg>
<svg style="left:46px;top:316px;" width="4" height="4" viewBox="0 0 4 4"><path d="M3.6 0.4V3.6H0.4Z" fill="#e4e4e4"/></svg>
<svg style="left:6px;top:323px;" width="19" height="18" viewBox="0 0 19 18"><path d="M5.5 17.5C4 14.5 2.2 12.6 1.2 10.4C0.8 9.2 2.2 8.4 3.2 9.4L5 11.4V4C5 2.6 7 2.6 7 4V8.5V2.4C7 1 9.2 1 9.2 2.4V8.5V3C9.2 1.6 11.3 1.6 11.3 3V9V5C11.3 3.7 13.3 3.7 13.3 5V12C13.3 14.5 12.6 16 12 17.5Z" fill="#d8d8d8" stroke="#e4e4e4" stroke-width=".7"/></svg>
<svg style="left:32px;top:324px;" width="18" height="18" viewBox="0 0 18 18"><circle cx="6.6" cy="6.4" r="4.8" fill="#8e8e8e" stroke="#c8c8c8" stroke-width="1.5"/><path d="M10.2 10.2L15.4 15.6" stroke="#c8c8c8" stroke-width="2.6" stroke-linecap="round"/></svg>
<div style="left:1px;top:345px;width:54px;height:1px;background:#3a3a3a;"></div>
<div style="left:1px;top:346px;width:54px;height:1px;background:#535353;"></div>
<div style="left:20px;top:366px;width:27px;height:27px;background:#ffffff;border:1px solid #8c8c8c"></div>
<svg style="left:20px;top:366px;" width="27" height="27" viewBox="0 0 27 27"><rect x="7.5" y="7.5" width="12" height="12" fill="#545454"/><path d="M2 25L25 2" stroke="#d8341a" stroke-width="2.2"/></svg>
<div style="left:7px;top:354px;width:28px;height:28px;background:#ffffff;border:1.5px solid #8c8c8c"></div>
<svg style="left:7px;top:354px;" width="28" height="28" viewBox="0 0 28 28"><path d="M2 26L26 2" stroke="#d8341a" stroke-width="2.2"/></svg>
<svg style="left:37px;top:352px;" width="12" height="12" viewBox="0 0 12 12"><path d="M2.5 4.5A4.5 4.5 0 0 1 8 8.6" fill="none" stroke="#c8c8c8" stroke-width="1.3"/><path d="M0.8 4.6L4.4 1.4L4.8 6Z M5.6 7.6H10.4L8 11Z" fill="#c8c8c8"/></svg>
<div style="left:4px;top:384px;width:14px;height:14px;background:#2e2e2e;"></div>
<svg style="left:4px;top:384px;" width="14" height="14" viewBox="0 0 14 14"><rect x="4.5" y="4.5" width="8" height="8" fill="#fff" stroke="#1a1a1a" stroke-width="1"/><rect x="6.8" y="6.8" width="3.4" height="3.4" fill="#1a1a1a"/><rect x="1" y="1" width="8" height="8" fill="#fff" stroke="#1a1a1a" stroke-width="1"/><path d="M1.5 8.5L8.5 1.5" stroke="#d8341a" stroke-width="1.3"/></svg>
<div style="left:8px;top:398px;width:17px;height:16px;background:#333333;border-radius:1px"></div>
<svg style="left:11px;top:401px;" width="11" height="11" viewBox="0 0 11 11"><rect x="1.2" y="1.2" width="8.4" height="8.4" fill="#6e6e6e" stroke="#e4e4e4" stroke-width="1.3"/></svg>
<span style="left:33.50px;top:400.82px;font-size:12.5px;color:#e4e4e4;font-weight:bold;font-family:'Liberation Serif', serif;">T</span>
<svg style="left:5px;top:423px;" width="12" height="12" viewBox="0 0 12 12"><rect x="1" y="1" width="10" height="10" fill="#000" stroke="#6a6a6a" stroke-width="1"/></svg>
<svg style="left:22px;top:423px" width="12" height="12" viewBox="0 0 12 12"><defs><linearGradient id="tg2"><stop offset="0" stop-color="#fafafa"/><stop offset="1" stop-color="#1e1e1e"/></linearGradient></defs><rect x="1" y="1" width="10" height="10" fill="url(#tg2)" stroke="#6a6a6a" stroke-width="1"/></svg>
<div style="left:36px;top:421px;width:16px;height:16px;background:#333333;border-radius:1px"></div>
<svg style="left:38px;top:423px;" width="12" height="12" viewBox="0 0 12 12"><rect x="1" y="1" width="10" height="10" fill="#fff" stroke="#bbb" stroke-width="1"/><path d="M1.5 10.5L10.5 1.5" stroke="#d8341a" stroke-width="1.8"/></svg>
<svg style="left:9px;top:446px;" width="14" height="13" viewBox="0 0 14 13"><rect x="1" y="1" width="11.6" height="10.6" fill="#3a3a3a" stroke="#e4e4e4" stroke-width="1.2"/><path d="M3 4H9M5.5 7.6H10.6" stroke="#e4e4e4" stroke-width="1.8"/></svg>
<div style="left:28px;top:442px;width:24px;height:21px;background:#333333;border-radius:2px"></div>
<svg style="left:33px;top:445px;" width="15" height="14" viewBox="0 0 15 14"><rect x="1" y="1" width="12.4" height="11.6" fill="#555" stroke="#e4e4e4" stroke-width="1.2"/><path d="M1 3.6H13.4" stroke="#e4e4e4" stroke-width="1.2"/></svg>
<svg style="left:47px;top:457px;" width="4" height="4" viewBox="0 0 4 4"><path d="M3.6 0.4V3.6H0.4Z" fill="#e4e4e4"/></svg>
<svg style="left:1826px;top:99px;" width="20" height="4" viewBox="0 0 20 4"><path d="M0.5 0V4M2.5 0V4M4.5 0V4M6.5 0V4M8.5 0V4M10.5 0V4M12.5 0V4M14.5 0V4M16.5 0V4M18.5 0V4" stroke="#1c1c1c" stroke-width="1"/></svg>
<svg style="left:1764px;top:109.7px;" width="20" height="20" viewBox="0 0 20 20"><path d="M1 6L3.6 3H7.6V15.4H1Z M11 3H15.4L18 6V15.4H11Z" fill="#cdcdcd"/><path d="M1 6H3.6V3Z M18 6H15.4V3Z" fill="#f0f0f0"/><path d="M9.3 0.8V17.4" stroke="#f0f0f0" stroke-width="1"/></svg>
<span style="left:1791.00px;top:115.37px;font-size:11.5px;color:#ececec;font-weight:bold;letter-spacing:-0.553px;">Seiten</span>
<svg style="left:1764px;top:137.5px;" width="20" height="20" viewBox="0 0 20 20"><path d="M9.5 1.5L18 7.2L9.5 12.9L1 7.2Z" fill="#d6d6d6"/><path d="M1 9.4L9.5 15.1L18 9.4V12L9.5 17.9L1 12Z" fill="#d6d6d6"/></svg>
<span style="left:1791.00px;top:143.17px;font-size:11.5px;color:#ececec;font-weight:bold;letter-spacing:-0.758px;">Ebenen</span>
<svg style="left:1764px;top:165.5px;" width="20" height="20" viewBox="0 0 20 20"><path d="M7.6 4.4H5.4A4 4 0 0 0 5.4 12.6H7.6 M11.4 4.4H13.6A4 4 0 0 1 13.6 12.6H11.4" fill="none" stroke="#e0e0e0" stroke-width="2.2"/><path d="M6.2 8.5H12.8" stroke="#e0e0e0" stroke-width="2"/></svg>
<span style="left:1791.00px;top:171.17px;font-size:11.5px;color:#ececec;font-weight:bold;letter-spacing:-0.346px;">Verknüpfungen</span>
<div style="left:1755px;top:192px;width:165px;height:1px;background:#333333;"></div>
<div style="left:1755px;top:193px;width:165px;height:1px;background:#575757;"></div>
<svg style="left:1826px;top:196px;" width="20" height="4" viewBox="0 0 20 4"><path d="M0.5 0V4M2.5 0V4M4.5 0V4M6.5 0V4M8.5 0V4M10.5 0V4M12.5 0V4M14.5 0V4M16.5 0V4M18.5 0V4" stroke="#1c1c1c" stroke-width="1"/></svg>
<svg style="left:1764px;top:206.5px;" width="20" height="20" viewBox="0 0 20 20"><path d="M1 3.5H18" stroke="#e0e0e0" stroke-width="1"/><path d="M1 8H18" stroke="#e0e0e0" stroke-width="2"/><path d="M1 13.5H18" stroke="#e0e0e0" stroke-width="3"/></svg>
<span style="left:1791.00px;top:212.17px;font-size:11.5px;color:#ececec;font-weight:bold;letter-spacing:-0.498px;">Kontur</span>
<svg style="left:1764px;top:234.5px;" width="20" height="20" viewBox="0 0 20 20"><rect x="1.5" y="3.0" width="5.4" height="5.4" fill="#2a2a2a" stroke="#e0e0e0" stroke-width="1"/><rect x="6.9" y="3.0" width="5.4" height="5.4" fill="#8a8a8a" stroke="#e0e0e0" stroke-width="1"/><rect x="12.3" y="3.0" width="5.4" height="5.4" fill="#6a6a6a" stroke="#e0e0e0" stroke-width="1"/><rect x="1.5" y="8.4" width="5.4" height="5.4" fill="#9a9a9a" stroke="#e0e0e0" stroke-width="1"/><rect x="6.9" y="8.4" width="5.4" height="5.4" fill="#6a6a6a" stroke="#e0e0e0" stroke-width="1"/><rect x="12.3" y="8.4" width="5.4" height="5.4" fill="#8a8a8a" stroke="#e0e0e0" stroke-width="1"/></svg>
<span style="left:1791.00px;top:240.17px;font-size:11.5px;color:#ececec;font-weight:bold;letter-spacing:-0.325px;">Farbfelder</span>
<svg style="left:1764px;top:262.5px;" width="20" height="20" viewBox="0 0 20 20"><defs><linearGradient id="dg1"><stop offset="0" stop-color="#2c2c2c"/><stop offset="1" stop-color="#d8d8d8"/></linearGradient></defs><rect x="1.5" y="2.5" width="16" height="12" fill="url(#dg1)" stroke="#e0e0e0" stroke-width="1"/></svg>
<span style="left:1791.00px;top:268.17px;font-size:11.5px;color:#ececec;font-weight:bold;letter-spacing:-0.194px;">Verlauf</span>
<div style="left:1755px;top:289px;width:165px;height:1px;background:#333333;"></div>
<div style="left:1755px;top:290px;width:165px;height:1px;background:#575757;"></div>
<svg style="left:1826px;top:293px;" width="20" height="4" viewBox="0 0 20 4"><path d="M0.5 0V4M2.5 0V4M4.5 0V4M6.5 0V4M8.5 0V4M10.5 0V4M12.5 0V4M14.5 0V4M16.5 0V4M18.5 0V4" stroke="#1c1c1c" stroke-width="1"/></svg>
<svg style="left:1764px;top:303.5px;" width="20" height="20" viewBox="0 0 20 20"></svg>
<span style="left:1765.00px;top:304.89px;font-size:17px;color:#e0e0e0;font-style:italic;font-family:'Liberation Serif', serif;letter-spacing:2.359px;">fx</span>
<span style="left:1791.00px;top:309.17px;font-size:11.5px;color:#ececec;font-weight:bold;letter-spacing:-0.480px;">Effekte</span>
<div style="left:1755px;top:330px;width:165px;height:1px;background:#333333;"></div>
<div style="left:1755px;top:331px;width:165px;height:1px;background:#575757;"></div>
<svg style="left:1826px;top:334px;" width="20" height="4" viewBox="0 0 20 4"><path d="M0.5 0V4M2.5 0V4M4.5 0V4M6.5 0V4M8.5 0V4M10.5 0V4M12.5 0V4M14.5 0V4M16.5 0V4M18.5 0V4" stroke="#1c1c1c" stroke-width="1"/></svg>
<svg style="left:1764px;top:344.5px;" width="20" height="20" viewBox="0 0 20 20"><rect x="1.5" y="8.5" width="5.5" height="5.5" fill="none" stroke="#e0e0e0" stroke-width="1"/><rect x="4.5" y="11.5" width="5.5" height="5.5" fill="#484848" stroke="#e0e0e0" stroke-width="1"/></svg>
<span style="left:1771.00px;top:344.30px;font-size:15px;color:#d8d8d8;font-weight:bold;">A</span>
<span style="left:1791.00px;top:350.17px;font-size:11.5px;color:#ececec;font-weight:bold;letter-spacing:-0.403px;">Zeichenformate</span>
<svg style="left:1764px;top:372.5px;" width="20" height="20" viewBox="0 0 20 20"><rect x="1.5" y="8.5" width="5.5" height="5.5" fill="none" stroke="#e0e0e0" stroke-width="1"/><rect x="4.5" y="11.5" width="5.5" height="5.5" fill="#484848" stroke="#e0e0e0" stroke-width="1"/><path d="M15 2.5V13.5M17.5 2.5V13.5M18.5 2.5H13A3 3 0 0 0 13 8.5H15" fill="#d8d8d8" stroke="#e0e0e0" stroke-width="1.2"/></svg>
<span style="left:1791.00px;top:378.17px;font-size:11.5px;color:#ececec;font-weight:bold;letter-spacing:-0.299px;">Absatzformate</span>
<svg style="left:1764px;top:400.5px;" width="20" height="20" viewBox="0 0 20 20"><rect x="1.5" y="8.5" width="5.5" height="5.5" fill="none" stroke="#e0e0e0" stroke-width="1"/><rect x="4.5" y="11.5" width="5.5" height="5.5" fill="#484848" stroke="#e0e0e0" stroke-width="1"/><path d="M7.5 2.5H18V13.5H10.5V8H7.5Z" fill="#9a9a9a" stroke="#e0e0e0" stroke-width="1.2" stroke-dasharray="2.2 1.4"/></svg>
<span style="left:1791.00px;top:406.17px;font-size:11.5px;color:#ececec;font-weight:bold;letter-spacing:-0.259px;">Objektformate</span>
<div style="left:1755px;top:427px;width:165px;height:1px;background:#333333;"></div>
<div style="left:1755px;top:428px;width:165px;height:1px;background:#575757;"></div>
<svg style="left:1826px;top:431px;" width="20" height="4" viewBox="0 0 20 4"><path d="M0.5 0V4M2.5 0V4M4.5 0V4M6.5 0V4M8.5 0V4M10.5 0V4M12.5 0V4M14.5 0V4M16.5 0V4M18.5 0V4" stroke="#1c1c1c" stroke-width="1"/></svg>
<svg style="left:1764px;top:441.5px;" width="20" height="20" viewBox="0 0 20 20"><rect x="1.5" y="1.5" width="15" height="14" fill="#5c5c5c" stroke="#e0e0e0" stroke-width="1.2"/><path d="M1.5 5H16.5M1.5 8.5H16.5M1.5 12H16.5" stroke="#e0e0e0" stroke-width="1.2"/><path d="M6 5V15.5" stroke="#e0e0e0" stroke-width="1"/><rect x="2" y="2" width="14" height="3" fill="#b8b8b8"/></svg>
<span style="left:1791.00px;top:447.17px;font-size:11.5px;color:#ececec;font-weight:bold;letter-spacing:-0.169px;">Tabelle</span>
<svg style="left:1764px;top:469.5px;" width="20" height="20" viewBox="0 0 20 20"><rect x="1.5" y="8.5" width="5.5" height="5.5" fill="none" stroke="#e0e0e0" stroke-width="1"/><rect x="4.5" y="11.5" width="5.5" height="5.5" fill="#484848" stroke="#e0e0e0" stroke-width="1"/><rect x="7.5" y="1.5" width="11" height="10.5" fill="#5c5c5c" stroke="#e0e0e0" stroke-width="1.2"/><path d="M7.5 5H18.5M7.5 8.5H18.5M11.5 5V12" stroke="#e0e0e0" stroke-width="1.1"/></svg>
<span style="left:1791.00px;top:475.17px;font-size:11.5px;color:#ececec;font-weight:bold;letter-spacing:-0.232px;">Tabellenformate</span>
<svg style="left:1764px;top:497.5px;" width="20" height="20" viewBox="0 0 20 20"><rect x="1.5" y="8.5" width="5.5" height="5.5" fill="none" stroke="#e0e0e0" stroke-width="1"/><rect x="4.5" y="11.5" width="5.5" height="5.5" fill="#484848" stroke="#e0e0e0" stroke-width="1"/><rect x="7.5" y="1.5" width="11" height="10.5" fill="#5c5c5c" stroke="#e0e0e0" stroke-width="1.2"/><path d="M7.5 4.5H18.5" stroke="#e0e0e0" stroke-width="1.1"/><rect x="11" y="6.5" width="6" height="4" fill="#cfcfcf"/></svg>
<span style="left:1791.00px;top:503.17px;font-size:11.5px;color:#ececec;font-weight:bold;letter-spacing:-0.302px;">Zellenformate</span>
<div style="left:1755px;top:524px;width:165px;height:1px;background:#333333;"></div>
<div style="left:1755px;top:525px;width:165px;height:1px;background:#575757;"></div>
<svg style="left:1826px;top:528px;" width="20" height="4" viewBox="0 0 20 4"><path d="M0.5 0V4M2.5 0V4M4.5 0V4M6.5 0V4M8.5 0V4M10.5 0V4M12.5 0V4M14.5 0V4M16.5 0V4M18.5 0V4" stroke="#1c1c1c" stroke-width="1"/></svg>
<svg style="left:1764px;top:538.5px;" width="20" height="20" viewBox="0 0 20 20"><path d="M7 1.5H13L17.5 6V11" fill="none" stroke="#e0e0e0" stroke-width="1.1"/><path d="M13 1.5V6H17.5" fill="none" stroke="#e0e0e0" stroke-width="1.1"/><path d="M0.5 6.5H5" stroke="#e0e0e0" stroke-width="1.8"/><path d="M4.2 3.4L8 6.5L4.2 9.6Z" fill="#e0e0e0"/><circle cx="12" cy="14" r="3.6" fill="none" stroke="#e0e0e0" stroke-width="2.6" stroke-dasharray="1.9 1.3"/><circle cx="12" cy="14" r="2.6" fill="#e0e0e0"/><circle cx="12" cy="14" r="1.1" fill="#484848"/></svg>
<span style="left:1791.00px;top:544.17px;font-size:11.5px;color:#ececec;font-weight:bold;letter-spacing:-0.542px;">Datenzusammenführ…</span>
<div style="left:1758px;top:564px;width:156px;height:25px;background:#323232;border-radius:2px"></div>
<svg style="left:1764px;top:566.5px;" width="20" height="20" viewBox="0 0 20 20"><path d="M14.6 4.6C13 1.4 5.4 1.6 5.2 6.2C5 10.4 14.4 9.4 14.4 14C14.4 18.6 6.4 18.8 4 15.4" fill="none" stroke="#d4d4d4" stroke-width="3.4" stroke-linecap="round"/><path d="M3 8.6L16.6 11.4" stroke="#323232" stroke-width="1"/></svg>
<span style="left:1791.00px;top:572.17px;font-size:11.5px;color:#ececec;font-weight:bold;letter-spacing:-0.371px;">Skripte</span>
<div style="left:1755px;top:593px;width:165px;height:1px;background:#333333;"></div>
<div style="left:1755px;top:594px;width:165px;height:1px;background:#575757;"></div>
<svg style="left:1826px;top:597px;" width="20" height="4" viewBox="0 0 20 4"><path d="M0.5 0V4M2.5 0V4M4.5 0V4M6.5 0V4M8.5 0V4M10.5 0V4M12.5 0V4M14.5 0V4M16.5 0V4M18.5 0V4" stroke="#1c1c1c" stroke-width="1"/></svg>
<svg style="left:1764px;top:607.5px;" width="20" height="20" viewBox="0 0 20 20"></svg>
<span style="left:1765.00px;top:607.40px;font-size:20px;color:#d8d8d8;font-style:italic;font-family:'Liberation Serif', serif;">A</span>
<span style="left:1791.00px;top:613.17px;font-size:11.5px;color:#ececec;font-weight:bold;letter-spacing:-0.645px;">Glyphen</span>
<svg style="left:1764px;top:635.5px;" width="20" height="20" viewBox="0 0 20 20"><path d="M15.5 1V18" stroke="#e0e0e0" stroke-width="1.1"/></svg>
<span style="left:1765.00px;top:636.42px;font-size:19px;color:#d8d8d8;">A</span>
<span style="left:1791.00px;top:641.17px;font-size:11.5px;color:#ececec;font-weight:bold;letter-spacing:-0.553px;">Zeichen</span>
<svg style="left:1764px;top:663.5px;" width="20" height="20" viewBox="0 0 20 20"><path d="M10.2 2V16.5M13.2 2V16.5M14.5 2H8A3.6 3.6 0 0 0 8 9.2H10.2" fill="#d0d0d0" stroke="#d0d0d0" stroke-width="1.5"/></svg>
<span style="left:1791.00px;top:669.17px;font-size:11.5px;color:#ececec;font-weight:bold;letter-spacing:-0.451px;">Absatz</span>
<div style="left:1755px;top:690px;width:165px;height:1px;background:#333333;"></div>
<div style="left:1755px;top:691px;width:165px;height:1px;background:#575757;"></div>
<svg style="left:1826px;top:694px;" width="20" height="4" viewBox="0 0 20 4"><path d="M0.5 0V4M2.5 0V4M4.5 0V4M6.5 0V4M8.5 0V4M10.5 0V4M12.5 0V4M14.5 0V4M16.5 0V4M18.5 0V4" stroke="#1c1c1c" stroke-width="1"/></svg>
<svg style="left:1764px;top:704.5px;" width="20" height="20" viewBox="0 0 20 20"><path d="M1 1.5H18M1 4H18M1 6.5H18M1 9H18M1 11.5H18M1 14H18" stroke="#e0e0e0" stroke-width="1"/><rect x="4.5" y="3" width="10" height="9.8" fill="#484848"/><circle cx="9.5" cy="8" r="3.6" fill="#d6d6d6"/></svg>
<span style="left:1791.00px;top:710.17px;font-size:11.5px;color:#ececec;font-weight:bold;letter-spacing:-0.317px;">Textumfluss</span>
<div style="left:1755px;top:731px;width:165px;height:1px;background:#333333;"></div>
<div style="left:1755px;top:732px;width:165px;height:1px;background:#575757;"></div>
<div style="left:122px;top:436px;width:209px;height:361px;background:#262626;border-radius:5px 5px 1px 1px;box-shadow:0 1px 5px rgba(0,0,0,.4)"></div>
<div style="left:122px;top:436px;width:209px;height:14px;background:#2d2d2d;border-radius:4px 4px 0 0"></div>
<svg style="left:128px;top:440px;" width="7" height="7" viewBox="0 0 7 7"><path d="M1 1L6 6M6 1L1 6" stroke="#e6e6e6" stroke-width="1.4"/></svg>
<svg style="left:317px;top:440px;" width="9" height="7" viewBox="0 0 9 7"><path d="M3.8 0.5V6.5L0.6 3.5Z M8 0.5V6.5L4.8 3.5Z" fill="#d8d8d8"/></svg>
<div style="left:122px;top:450px;width:209px;height:17px;background:#343434;"></div>
<div style="left:123px;top:451px;width:69px;height:16px;background:#3a3a3a;border-radius:2px 2px 0 0"></div>
<div style="left:193px;top:450px;width:66px;height:17px;background:#484848;border-radius:2px 2px 0 0"></div>
<span style="left:130.00px;top:452.93px;font-size:11.3px;color:#a8a8a8;font-weight:bold;letter-spacing:-0.352px;">Ausrichten</span>
<span style="left:200.20px;top:452.93px;font-size:11.3px;color:#f2f2f2;font-weight:bold;letter-spacing:-0.327px;">Pathfinder</span>
<div style="left:122px;top:467px;width:209px;height:186px;background:#484848;"></div>
<span style="left:127.00px;top:473.76px;font-size:9.5px;color:#efefef;letter-spacing:-0.178px;">Pfade:</span>
<svg style="left:131px;top:488px;" width="18" height="16" viewBox="0 0 18 16"><path d="M2.5 14C3.5 8 8 3.5 14 2.5" fill="none" stroke="#e8e8e8" stroke-width="1.2" stroke-dasharray="1.4 1.4"/><rect x="1" y="12.5" width="3" height="3" fill="#e8e8e8"/><rect x="12.5" y="1" width="3" height="3" fill="#e8e8e8"/></svg>
<svg style="left:173px;top:488px;" width="18" height="16" viewBox="0 0 18 16"><ellipse cx="8.5" cy="9" rx="7.6" ry="5.6" fill="none" stroke="#e8e8e8" stroke-width="1.2"/><path d="M9 9L16 2" stroke="#e8e8e8" stroke-width="1.4"/></svg>
<svg style="left:215px;top:488px;" width="19" height="16" viewBox="0 0 19 16"><ellipse cx="9" cy="9" rx="7.6" ry="5.6" fill="none" stroke="#e8e8e8" stroke-width="1.2"/><path d="M8 3.2C12 2.4 16 5 16.6 8.6" fill="none" stroke="#484848" stroke-width="2"/><path d="M8 3.2C12 2.4 16 5 16.6 8.6" fill="none" stroke="#e8e8e8" stroke-width="1" stroke-dasharray="1.2 1.2"/><rect x="6.6" y="1.6" width="3" height="3" fill="#e8e8e8"/><rect x="15" y="7.4" width="3" height="3" fill="#e8e8e8"/></svg>
<svg style="left:257px;top:488px;" width="17" height="17" viewBox="0 0 17 17"><path d="M5 2.5H1.5V12.5H3" fill="none" stroke="#e8e8e8" stroke-width="1.2"/><path d="M1.6 10.6L5.6 13L2.6 15.6Z" fill="#e8e8e8"/><path d="M8 3V12" stroke="#e8e8e8" stroke-width="1.2"/><rect x="6.4" y="1.2" width="3.2" height="3.2" fill="#484848" stroke="#e8e8e8" stroke-width="1"/><rect x="6.4" y="11.4" width="3.2" height="3.2" fill="#e8e8e8"/><path d="M11 12.5H14.5V2.5H12" fill="none" stroke="#e8e8e8" stroke-width="1.2"/><path d="M13.6 0L10.6 2.4L13.6 5Z" fill="#e8e8e8"/></svg>
<div style="left:127px;top:509px;width:197px;height:1px;background:#5e5e5e;"></div>
<span style="left:127.00px;top:513.96px;font-size:9.5px;color:#efefef;letter-spacing:-0.132px;">Pathfinder:</span>
<svg style="left:132px;top:529px;" width="15" height="14" viewBox="0 0 15 14"><path d="M1 0.8H9.2V4.6H13.4V12.8H5V9H1Z" fill="#9a9a9a" stroke="#e8e8e8" stroke-width="1.2"/><path d="M5 4.6H9.2V9H5Z" fill="none" stroke="#777" stroke-width=".8"/></svg>
<svg style="left:174px;top:529px;" width="15" height="14" viewBox="0 0 15 14"><rect x="5" y="4.6" width="8.4" height="8.2" fill="none" stroke="#b0b0b0" stroke-width="1"/><path d="M1 0.8H9.2V4.6H5V9H1Z" fill="#8a8a8a" stroke="#e8e8e8" stroke-width="1.2"/></svg>
<svg style="left:216px;top:529px;" width="15" height="14" viewBox="0 0 15 14"><rect x="1" y="0.8" width="8.2" height="8.2" fill="none" stroke="#b0b0b0" stroke-width="1"/><rect x="5" y="4.6" width="8.4" height="8.2" fill="none" stroke="#b0b0b0" stroke-width="1"/><rect x="5" y="4.6" width="4.2" height="4.4" fill="#a8a8a8" stroke="#e8e8e8" stroke-width="1"/></svg>
<svg style="left:258px;top:529px;" width="15" height="14" viewBox="0 0 15 14"><path d="M1 0.8H9.2V4.6H13.4V12.8H5V9H1Z" fill="#9a9a9a" stroke="#e8e8e8" stroke-width="1.2"/><rect x="5" y="4.6" width="4.2" height="4.4" fill="#3a3a3a" stroke="#e8e8e8" stroke-width="1"/></svg>
<svg style="left:300px;top:529px;" width="15" height="14" viewBox="0 0 15 14"><rect x="1" y="0.8" width="8.2" height="8.2" fill="none" stroke="#b0b0b0" stroke-width="1" stroke-dasharray="1.4 1"/><path d="M9.2 4.6H13.4V12.8H5V9H9.2Z" fill="#8a8a8a" stroke="#e8e8e8" stroke-width="1.2"/></svg>
<div style="left:127px;top:549px;width:197px;height:1px;background:#5e5e5e;"></div>
<span style="left:127.00px;top:553.56px;font-size:9.5px;color:#efefef;letter-spacing:-0.191px;">Form konvertieren:</span>
<svg style="left:132px;top:569px;" width="17" height="14" viewBox="0 0 17 14"><rect x="1.4" y="1.4" width="13.4" height="11" fill="none" stroke="#e8e8e8" stroke-width="1.2"/></svg>
<svg style="left:174px;top:569px;" width="17" height="14" viewBox="0 0 17 14"><rect x="1.4" y="1.4" width="13.4" height="11" rx="2.6" fill="none" stroke="#e8e8e8" stroke-width="1.2"/></svg>
<svg style="left:216px;top:569px;" width="17" height="14" viewBox="0 0 17 14"><path d="M4.6 1.4H11.4L14.8 4.6V9.2L11.4 12.4H4.6L1.4 9.2V4.6Z" fill="none" stroke="#e8e8e8" stroke-width="1.2"/></svg>
<svg style="left:258px;top:569px;" width="17" height="14" viewBox="0 0 17 14"><path d="M4 1.4H12A2.4 2.4 0 0 0 14.8 4.2V9.6A2.4 2.4 0 0 0 12 12.4H4A2.4 2.4 0 0 0 1.4 9.6V4.2A2.4 2.4 0 0 0 4 1.4Z" fill="none" stroke="#e8e8e8" stroke-width="1.2"/></svg>
<svg style="left:299px;top:569px;" width="19" height="14" viewBox="0 0 19 14"><ellipse cx="9" cy="7" rx="7.8" ry="5.6" fill="none" stroke="#e8e8e8" stroke-width="1.2"/></svg>
<svg style="left:132px;top:592px;" width="17" height="16" viewBox="0 0 17 16"><path d="M8 2.6L14.8 13.6H1.2Z" fill="none" stroke="#e8e8e8" stroke-width="1.2"/></svg>
<svg style="left:174px;top:592px;" width="17" height="16" viewBox="0 0 17 16"><path d="M4.8 2.6H11.4L14.8 8.2L11.4 13.6H4.8L1.4 8.2Z" fill="none" stroke="#e8e8e8" stroke-width="1.2"/></svg>
<svg style="left:216px;top:592px;" width="17" height="16" viewBox="0 0 17 16"><path d="M1.5 13.6L13.6 2.4" stroke="#e8e8e8" stroke-width="1.3"/></svg>
<svg style="left:258px;top:592px;" width="17" height="16" viewBox="0 0 17 16"><path d="M7.6 1V14M1 7.6H14" stroke="#e8e8e8" stroke-width="1.2"/></svg>
<div style="left:127px;top:613px;width:197px;height:1px;background:#5e5e5e;"></div>
<span style="left:127.00px;top:617.76px;font-size:9.5px;color:#efefef;letter-spacing:-0.172px;">Punkt konvertieren:</span>
<svg style="left:132px;top:631px;" width="16" height="18" viewBox="0 0 16 18"><path d="M4 5.2H14M4 5.2V15" stroke="#e8e8e8" stroke-width="1.1"/><rect x="2" y="3.2" width="4" height="4" fill="#a8a8a8" stroke="#e8e8e8" stroke-width="1"/></svg>
<svg style="left:174px;top:631px;" width="18" height="18" viewBox="0 0 18 18"><path d="M3.8 4.6H14.5M3.8 4.6V16" stroke="#e8e8e8" stroke-width="1.1"/><rect x="1.8" y="2.6" width="4" height="4" fill="#a8a8a8" stroke="#e8e8e8" stroke-width="1"/><rect x="8.6" y="3.2" width="3" height="3" fill="#e8e8e8"/><rect x="2.4" y="10.6" width="3" height="3" fill="#e8e8e8"/></svg>
<svg style="left:215px;top:630px;" width="18" height="18" viewBox="0 0 18 18"><path d="M1 5.6C6 6 9.4 10 9.8 16" fill="none" stroke="#e8e8e8" stroke-width="1.1"/><path d="M2.6 2.6L14.6 14.6" stroke="#e8e8e8" stroke-width="1.1"/><rect x="1" y="1" width="3" height="3" fill="#e8e8e8"/><rect x="13" y="13" width="3" height="3" fill="#e8e8e8"/><rect x="5.2" y="5" width="4" height="4" fill="#a8a8a8" stroke="#e8e8e8" stroke-width="1"/></svg>
<svg style="left:257px;top:630px;" width="18" height="18" viewBox="0 0 18 18"><path d="M16 5C11 5.4 6.4 10 6 16" fill="none" stroke="#e8e8e8" stroke-width="1.1"/><path d="M2.4 13.4L13.6 2.4" stroke="#e8e8e8" stroke-width="1.1"/><rect x="12" y="1" width="3" height="3" fill="#e8e8e8"/><rect x="1" y="12" width="3" height="3" fill="#e8e8e8"/><rect x="5.6" y="5.6" width="4" height="4" fill="#a8a8a8" stroke="#e8e8e8" stroke-width="1"/></svg>
<div style="left:122px;top:467px;width:1px;height:330px;background:#333333;"></div>
<div style="left:330px;top:467px;width:1px;height:330px;background:#333333;"></div>
<div style="left:122px;top:653px;width:209px;height:3px;background:#262626;"></div>
<div style="left:122px;top:656px;width:209px;height:17px;background:#343434;"></div>
<div style="left:122px;top:656px;width:93px;height:17px;background:#484848;border-radius:2px 2px 0 0"></div>
<svg style="left:127px;top:659.5px;" width="7" height="10" viewBox="0 0 7 10"><path d="M1 3.8L3.5 1L6 3.8M1 6.2L3.5 9L6 6.2" fill="none" stroke="#e8e8e8" stroke-width="1.1"/></svg>
<span style="left:136.50px;top:658.93px;font-size:11.3px;color:#f2f2f2;font-weight:bold;letter-spacing:-0.201px;">Informationen</span>
<svg style="left:311px;top:660px;" width="16" height="9" viewBox="0 0 16 9"><path d="M0.5 2H5.5L3 4.8Z" fill="#dcdcdc"/><path d="M7 1H15M7 3.2H15M7 5.4H15M7 7.6H15" stroke="#dcdcdc" stroke-width="1"/></svg>
<div style="left:122px;top:673px;width:209px;height:124px;background:#484848;"></div>
<svg style="left:127px;top:687px;" width="13" height="13" viewBox="0 0 13 13"><path d="M5.2 0.6V10M0.6 5.2H10" stroke="#e8e8e8" stroke-width="1.1"/><path d="M8.6 7.4L11.6 9.2L8.6 11Z" fill="#e8e8e8"/></svg>
<span style="left:146.40px;top:678.86px;font-size:9.5px;color:#ececec;letter-spacing:0.008px;">X:</span>
<span style="left:156.20px;top:678.86px;font-size:9.5px;color:#ececec;letter-spacing:-0.155px;">844 px</span>
<span style="left:146.40px;top:690.76px;font-size:9.5px;color:#ececec;letter-spacing:0.273px;">Y:</span>
<span style="left:156.20px;top:690.76px;font-size:9.5px;color:#ececec;letter-spacing:-0.155px;">533 px</span>
<span style="left:146.40px;top:702.66px;font-size:9.5px;color:#ececec;letter-spacing:-0.450px;">D:</span>
<div style="left:224.5px;top:676px;width:1px;height:37px;background:#5e5e5e;"></div>
<div style="left:224.5px;top:718px;width:1px;height:23px;background:#5e5e5e;"></div>
<svg style="left:230px;top:686px;" width="12" height="12" viewBox="0 0 12 12"><path d="M2.5 10V2.5H10" fill="none" stroke="#e8e8e8" stroke-width="1.1"/><path d="M2.5 10.5H10.5V3" fill="none" stroke="#e8e8e8" stroke-width="1" stroke-dasharray="1 1"/><path d="M8.6 0.4L11.4 2.5L8.6 4.6Z M0.4 8.4H4.6L2.5 11.4Z" fill="#e8e8e8"/></svg>
<span style="left:249.00px;top:678.86px;font-size:9.5px;color:#ececec;letter-spacing:-0.192px;">B:</span>
<span style="left:249.00px;top:690.76px;font-size:9.5px;color:#ececec;letter-spacing:-0.350px;">H:</span>
<svg style="left:245px;top:701px;" width="12" height="9" viewBox="0 0 12 9"><path d="M1 7.6H10.6L7 1.4Z" fill="#9a9a9a" stroke="#e8e8e8" stroke-width="1"/></svg>
<div style="left:124px;top:715px;width:202px;height:1px;background:#5e5e5e;"></div>
<div style="left:124px;top:742.5px;width:202px;height:1px;background:#5e5e5e;"></div>
<span style="left:190.50px;top:749.86px;font-size:9.5px;color:#ececec;letter-spacing:-0.126px;">Position:</span>
<span style="left:156.10px;top:761.76px;font-size:9.5px;color:#ececec;letter-spacing:-0.166px;">Letzte Änderung:</span>
<span style="left:201.40px;top:773.66px;font-size:9.5px;color:#ececec;letter-spacing:-0.160px;">Autor:</span>
<span style="left:178.60px;top:785.56px;font-size:9.5px;color:#ececec;letter-spacing:-0.222px;">Dateigröße:</span>
<div style="left:1544px;top:522px;width:209px;height:206px;background:#262626;box-shadow:0 1px 5px rgba(0,0,0,.4)"></div>
<div style="left:1545px;top:523px;width:207px;height:21px;background:#333333;"></div>
<div style="left:1546px;top:526px;width:87px;height:18px;background:#2d2d2d;border-radius:2px 2px 0 0"></div>
<div style="left:1633px;top:526px;width:54px;height:18px;background:#484848;border-radius:2px 2px 0 0"></div>
<span style="left:1552.60px;top:529.13px;font-size:11.3px;color:#b2b2b2;font-weight:bold;letter-spacing:-0.356px;">Datenzusamme</span>
<svg style="left:1636px;top:529.5px;" width="7" height="10" viewBox="0 0 7 10"><path d="M1 3.8L3.5 1L6 3.8M1 6.2L3.5 9L6 6.2" fill="none" stroke="#e8e8e8" stroke-width="1.1"/></svg>
<span style="left:1645.20px;top:529.13px;font-size:11.3px;color:#f4f4f4;font-weight:bold;letter-spacing:-0.330px;">Skripte</span>
<svg style="left:1711px;top:530px;" width="11" height="9" viewBox="0 0 11 9"><path d="M0.8 0.6V8.4L5 4.5Z M5.8 0.6V8.4L10 4.5Z" fill="#d8d8d8"/></svg>
<div style="left:1727px;top:529px;width:1px;height:11px;background:#5a5a5a;"></div>
<div style="left:1729px;top:529px;width:1px;height:11px;background:#5a5a5a;"></div>
<svg style="left:1733.5px;top:530px;" width="16" height="9" viewBox="0 0 16 9"><path d="M0.5 2H5.5L3 4.8Z" fill="#dcdcdc"/><path d="M7 1H15M7 3.2H15M7 5.4H15M7 7.6H15" stroke="#dcdcdc" stroke-width="1"/></svg>
<div style="left:1545px;top:544px;width:207px;height:2px;background:#2a2a2a;"></div>
<div style="left:1545px;top:546px;width:194px;height:19px;background:#494949;"></div>
<div style="left:1545px;top:565px;width:194px;height:1px;background:#303030;"></div>
<svg style="left:1608px;top:548.5px;" width="17" height="15" viewBox="0 0 17 15"><path d="M9.4 3.2C8.4 0.9 3.4 1 3.4 4C3.4 7 9.6 6.2 9.6 9.3C9.6 12.3 4.2 12.5 2.4 10.3" fill="none" stroke="#dcdcdc" stroke-width="2.9" stroke-linecap="round"/><path d="M1.2 5.4L11 7.6" stroke="#484848" stroke-width=".9"/><ellipse cx="12.6" cy="10" rx="3.3" ry="4.6" transform="rotate(20 12.6 10)" fill="#d6d6d6" stroke="#484848" stroke-width=".7"/><path d="M14.2 6.4L11.2 13.6" stroke="#484848" stroke-width="1.2"/></svg>
<span style="left:1628.00px;top:551.07px;font-size:9.6px;color:#e6e6e6;letter-spacing:-0.215px;">FindChangeByList.jsx</span>
<div style="left:1545px;top:566px;width:194px;height:19px;background:#494949;"></div>
<div style="left:1545px;top:585px;width:194px;height:1px;background:#303030;"></div>
<svg style="left:1550px;top:571px;" width="7" height="11" viewBox="0 0 7 11"><path d="M0.8 0.8V10.2L6 5.5Z" fill="#d0d0d0"/></svg>
<svg style="left:1609px;top:569px;" width="16" height="13" viewBox="0 0 16 13"><path d="M0.8 2.2C0.8 1.4 1.2 1 2 1H5.6L7 2.6H14C14.8 2.6 15.2 3 15.2 3.8V11.2C15.2 12 14.8 12.2 14 12.2H2C1.2 12.2 0.8 12 0.8 11.2Z" fill="#cfcfcf"/><path d="M1 4.2H15" stroke="#e6e6e6" stroke-width=".8"/></svg>
<span style="left:1628.00px;top:571.07px;font-size:9.6px;color:#e6e6e6;letter-spacing:-0.199px;">FindChangeSupport</span>
<div style="left:1545px;top:586px;width:194px;height:19px;background:#494949;"></div>
<div style="left:1545px;top:605px;width:194px;height:1px;background:#303030;"></div>
<svg style="left:1608px;top:588.5px;" width="17" height="15" viewBox="0 0 17 15"><path d="M9.4 3.2C8.4 0.9 3.4 1 3.4 4C3.4 7 9.6 6.2 9.6 9.3C9.6 12.3 4.2 12.5 2.4 10.3" fill="none" stroke="#dcdcdc" stroke-width="2.9" stroke-linecap="round"/><path d="M1.2 5.4L11 7.6" stroke="#484848" stroke-width=".9"/><ellipse cx="12.6" cy="10" rx="3.3" ry="4.6" transform="rotate(20 12.6 10)" fill="#d6d6d6" stroke="#484848" stroke-width=".7"/><path d="M14.2 6.4L11.2 13.6" stroke="#484848" stroke-width="1.2"/></svg>
<span style="left:1628.00px;top:591.07px;font-size:9.6px;color:#e6e6e6;letter-spacing:-0.220px;">ImageCatalog.jsx</span>
<div style="left:1545px;top:606px;width:194px;height:19px;background:#46546e;"></div>
<div style="left:1545px;top:625px;width:194px;height:1px;background:#303030;"></div>
<svg style="left:1608px;top:608.5px;" width="17" height="15" viewBox="0 0 17 15"><path d="M9.4 3.2C8.4 0.9 3.4 1 3.4 4C3.4 7 9.6 6.2 9.6 9.3C9.6 12.3 4.2 12.5 2.4 10.3" fill="none" stroke="#dcdcdc" stroke-width="2.9" stroke-linecap="round"/><path d="M1.2 5.4L11 7.6" stroke="#484848" stroke-width=".9"/><ellipse cx="12.6" cy="10" rx="3.3" ry="4.6" transform="rotate(20 12.6 10)" fill="#d6d6d6" stroke="#484848" stroke-width=".7"/><path d="M14.2 6.4L11.2 13.6" stroke="#484848" stroke-width="1.2"/></svg>
<span style="left:1628.00px;top:611.07px;font-size:9.6px;color:#f4f4f4;letter-spacing:-0.188px;">makeAPhotoBook.jsx</span>
<div style="left:1545px;top:626px;width:194px;height:19px;background:#494949;"></div>
<div style="left:1545px;top:645px;width:194px;height:1px;background:#303030;"></div>
<svg style="left:1608px;top:628.5px;" width="17" height="15" viewBox="0 0 17 15"><path d="M9.4 3.2C8.4 0.9 3.4 1 3.4 4C3.4 7 9.6 6.2 9.6 9.3C9.6 12.3 4.2 12.5 2.4 10.3" fill="none" stroke="#dcdcdc" stroke-width="2.9" stroke-linecap="round"/><path d="M1.2 5.4L11 7.6" stroke="#484848" stroke-width=".9"/><ellipse cx="12.6" cy="10" rx="3.3" ry="4.6" transform="rotate(20 12.6 10)" fill="#d6d6d6" stroke="#484848" stroke-width=".7"/><path d="M14.2 6.4L11.2 13.6" stroke="#484848" stroke-width="1.2"/></svg>
<span style="left:1628.00px;top:631.07px;font-size:9.6px;color:#e6e6e6;letter-spacing:-0.190px;">MakeGrid.jsx</span>
<div style="left:1545px;top:646px;width:194px;height:19px;background:#494949;"></div>
<div style="left:1545px;top:665px;width:194px;height:1px;background:#303030;"></div>
<svg style="left:1608px;top:648.5px;" width="17" height="15" viewBox="0 0 17 15"><path d="M9.4 3.2C8.4 0.9 3.4 1 3.4 4C3.4 7 9.6 6.2 9.6 9.3C9.6 12.3 4.2 12.5 2.4 10.3" fill="none" stroke="#dcdcdc" stroke-width="2.9" stroke-linecap="round"/><path d="M1.2 5.4L11 7.6" stroke="#484848" stroke-width=".9"/><ellipse cx="12.6" cy="10" rx="3.3" ry="4.6" transform="rotate(20 12.6 10)" fill="#d6d6d6" stroke="#484848" stroke-width=".7"/><path d="M14.2 6.4L11.2 13.6" stroke="#484848" stroke-width="1.2"/></svg>
<span style="left:1628.00px;top:651.07px;font-size:9.6px;color:#e6e6e6;letter-spacing:-0.230px;">makePicIndd_II.jsx</span>
<div style="left:1545px;top:666px;width:194px;height:19px;background:#494949;"></div>
<div style="left:1545px;top:685px;width:194px;height:1px;background:#303030;"></div>
<svg style="left:1608px;top:668.5px;" width="17" height="15" viewBox="0 0 17 15"><path d="M9.4 3.2C8.4 0.9 3.4 1 3.4 4C3.4 7 9.6 6.2 9.6 9.3C9.6 12.3 4.2 12.5 2.4 10.3" fill="none" stroke="#dcdcdc" stroke-width="2.9" stroke-linecap="round"/><path d="M1.2 5.4L11 7.6" stroke="#484848" stroke-width=".9"/><ellipse cx="12.6" cy="10" rx="3.3" ry="4.6" transform="rotate(20 12.6 10)" fill="#d6d6d6" stroke="#484848" stroke-width=".7"/><path d="M14.2 6.4L11.2 13.6" stroke="#484848" stroke-width="1.2"/></svg>
<span style="left:1628.00px;top:671.07px;font-size:9.6px;color:#e6e6e6;letter-spacing:-0.204px;">Neon.jsx</span>
<div style="left:1545px;top:686px;width:194px;height:19px;background:#494949;"></div>
<div style="left:1545px;top:705px;width:194px;height:1px;background:#303030;"></div>
<svg style="left:1608px;top:688.5px;" width="17" height="15" viewBox="0 0 17 15"><path d="M9.4 3.2C8.4 0.9 3.4 1 3.4 4C3.4 7 9.6 6.2 9.6 9.3C9.6 12.3 4.2 12.5 2.4 10.3" fill="none" stroke="#dcdcdc" stroke-width="2.9" stroke-linecap="round"/><path d="M1.2 5.4L11 7.6" stroke="#484848" stroke-width=".9"/><ellipse cx="12.6" cy="10" rx="3.3" ry="4.6" transform="rotate(20 12.6 10)" fill="#d6d6d6" stroke="#484848" stroke-width=".7"/><path d="M14.2 6.4L11.2 13.6" stroke="#484848" stroke-width="1.2"/></svg>
<span style="left:1628.00px;top:691.07px;font-size:9.6px;color:#e6e6e6;letter-spacing:-0.165px;">PathEffects.jsx</span>
<div style="left:1739px;top:546px;width:13px;height:160px;background:#3a3a3a;"></div>
<div style="left:1739px;top:546px;width:1px;height:160px;background:#2c2c2c;"></div>
<svg style="left:1741px;top:550px;" width="9" height="6" viewBox="0 0 9 6"><path d="M0.8 5.2L4.5 0.8L8.2 5.2Z" fill="#e6e6e6"/></svg>
<svg style="left:1741px;top:695px;" width="9" height="6" viewBox="0 0 9 6"><path d="M0.8 0.8L4.5 5.2L8.2 0.8Z" fill="#e6e6e6"/></svg>
<div style="left:1741px;top:628px;width:10px;height:27px;background:#8c8c8c;"></div>
<div style="left:1545px;top:706px;width:207px;height:13px;background:#484848;"></div>
<svg style="left:1740px;top:706px;" width="11" height="11" viewBox="0 0 11 11"><g fill="#1e1e1e"><rect x="9" y="1" width="1" height="1"/><rect x="9" y="3" width="1" height="1"/><rect x="7" y="3" width="1" height="1"/><rect x="9" y="5" width="1" height="1"/><rect x="7" y="5" width="1" height="1"/><rect x="5" y="5" width="1" height="1"/><rect x="9" y="7" width="1" height="1"/><rect x="7" y="7" width="1" height="1"/><rect x="5" y="7" width="1" height="1"/><rect x="3" y="7" width="1" height="1"/><rect x="9" y="9" width="1" height="1"/><rect x="7" y="9" width="1" height="1"/><rect x="5" y="9" width="1" height="1"/><rect x="3" y="9" width="1" height="1"/><rect x="1" y="9" width="1" height="1"/></g></svg>
<div style="left:1545px;top:719px;width:207px;height:1px;background:#2a2a2a;"></div>
<div style="left:1545px;top:720px;width:207px;height:7px;background:#484848;"></div>
<svg style="left:1638px;top:721.5px;" width="20" height="4" viewBox="0 0 20 4"><path d="M0.5 0V4M2.5 0V4M4.5 0V4M6.5 0V4M8.5 0V4M10.5 0V4M12.5 0V4M14.5 0V4M16.5 0V4M18.5 0V4" stroke="#1c1c1c" stroke-width="1"/></svg>
<svg style="left:560px;top:345px;" width="130" height="230" viewBox="0 0 130 230"><circle cx="111" cy="111" r="87" fill="none" stroke="#2f2f2f" stroke-width="28"/></svg>
<span style="left:1162.00px;top:331.41px;font-size:260px;color:#2f2f2f;">r</span>
<span style="left:405.00px;width:1000px;text-align:center;top:864.03px;font-size:15.8px;color:#2b2b2b;letter-spacing:0.660px;">www.rolanddreger.net</span>
<svg style="left:870px;top:660px;" width="72" height="36" viewBox="0 0 72 36"><circle cx="36" cy="3" r="29.5" fill="#5e5e5e"/></svg>
<div style="left:618px;top:302px;width:564px;height:375px;background:#4b4b4b;border-radius:5px 5px 1px 1px;box-shadow:0 14px 38px 2px rgba(0,0,0,.55),0 0 0 1px rgba(0,0,0,.22)"></div>
<div style="left:618px;top:302px;width:564px;height:22px;background:linear-gradient(#efefef,#d6d6d6);border-radius:5px 5px 0 0;border-bottom:1px solid #9a9a9a"></div>
<span style="left:400.00px;width:1000px;text-align:center;top:307.30px;font-size:13px;color:#444;letter-spacing:0.425px;">Fotobuch mit InDesign</span>
<div style="left:647px;top:352px;width:214px;height:139px;background:#dcdcdc;border:1px solid #3a3a3a"></div>
<div style="left:668px;top:374px;width:172px;height:71px;background:#4b4b4b;border:1px solid #3a3a3a"></div>
<div style="left:675px;top:379px;width:160px;height:60px;background:linear-gradient(#f0f0f0,#f7f7f7);box-shadow:0 0 0 1px #3c3c3c"></div>
<div style="left:939px;top:352px;width:214px;height:139px;background:#dcdcdc;border:1px solid #3a3a3a"></div>
<div style="left:960px;top:374px;width:172px;height:71px;background:#4b4b4b;border:1px solid #3a3a3a"></div>
<div style="left:967px;top:379px;width:160px;height:60px;background:linear-gradient(#f0f0f0,#f7f7f7);box-shadow:0 0 0 1px #3c3c3c"></div>
<span style="left:672.40px;top:458.19px;font-size:12.3px;color:#f4f4f4;letter-spacing:-0.084px;">Bild an Seitengröße anpassen</span>
<span style="left:967.60px;top:458.19px;font-size:12.3px;color:#f4f4f4;letter-spacing:-0.101px;">Seite an Bildgröße anpassen</span>
<svg style="left:696px;top:393px;" width="41" height="28" viewBox="0 0 41 28"><rect x="0.5" y="0.5" width="40" height="27" fill="#fdfdfd" stroke="#e0e0e0" stroke-width="1"/><g transform="translate(3,3)"><rect width="35" height="22" fill="#3f9ad8"/><path d="M2.8000000000000003 20.240000000000002L10.5 9.24L17.5 20.240000000000002Z" fill="#bfe6f6"/><path d="M18.2 20.240000000000002Q23.1 9.24 28.7 17.6L34.3 15.399999999999999V20.240000000000002Z" fill="#3c8f6a"/><rect y="19.36" width="35" height="2.6399999999999997" fill="#3b8fcf"/><ellipse cx="12.6" cy="4.84" rx="2.45" ry="1.54" fill="#fff"/><ellipse cx="23.1" cy="5.720000000000001" rx="2.8000000000000003" ry="1.54" fill="#fff"/><circle cx="25.9" cy="4.4" r="1.54" fill="#f4d23c"/></g></svg>
<svg style="left:750px;top:402px;" width="16" height="12" viewBox="0 0 16 12"><path d="M1 6H13" stroke="#555" stroke-width="1.6"/><path d="M8.6 1.4L13.6 6L8.6 10.6" fill="none" stroke="#555" stroke-width="1.6"/></svg>
<svg style="left:777px;top:394px;" width="37" height="24" viewBox="0 0 37 24"><rect x="1" y="2" width="35" height="20" fill="#a9cbee"/><g transform="translate(9,4)"><rect width="19" height="16" fill="#3f9ad8"/><path d="M1.52 14.72L5.7 6.72L9.5 14.72Z" fill="#bfe6f6"/><path d="M9.88 14.72Q12.540000000000001 6.72 15.579999999999998 12.8L18.62 11.2V14.72Z" fill="#3c8f6a"/><rect y="14.08" width="19" height="1.92" fill="#3b8fcf"/><ellipse cx="6.84" cy="3.52" rx="1.33" ry="1.12" fill="#fff"/><ellipse cx="12.540000000000001" cy="4.16" rx="1.52" ry="1.12" fill="#fff"/><circle cx="14.06" cy="3.2" r="1.12" fill="#f4d23c"/></g><rect x="6.2" y="1.2" width="24.6" height="21.6" fill="none" stroke="#e0431f" stroke-width="1.2"/><rect x="9" y="4" width="19" height="16" fill="none" stroke="#111" stroke-width="1.4"/></svg>
<span style="left:791.60px;top:421.78px;font-size:9px;color:#111;font-weight:bold;">A</span>
<svg style="left:992px;top:397px;" width="30" height="22" viewBox="0 0 30 22"><rect x="0.5" y="0.5" width="29" height="21" fill="#fdfdfd" stroke="#e0e0e0" stroke-width="1"/><g transform="translate(3,3)"><rect width="24" height="16" fill="#3d9ee0"/><path d="M0 8.8L5.28 4.8L10.08 9.28Z" fill="#e8eef2"/><ellipse cx="14.879999999999999" cy="3.2" rx="2.4000000000000004" ry="1.28" fill="#fff"/><circle cx="16.799999999999997" cy="2.56" r="1.12" fill="#f4e04c"/><rect y="8.96" width="24" height="7.04" fill="#6cc230"/><ellipse cx="14.399999999999999" cy="10.88" rx="7.199999999999999" ry="1.44" fill="#9a5a28"/><circle cx="20.64" cy="8.0" r="2.08" fill="#2f8c2c"/><circle cx="2.88" cy="9.6" r="1.28" fill="#2f8c2c"/><circle cx="15.84" cy="9.6" r="0.8" fill="#d43a2a"/></g></svg>
<svg style="left:1034px;top:402px;" width="16" height="12" viewBox="0 0 16 12"><path d="M1 6H13" stroke="#555" stroke-width="1.6"/><path d="M8.6 1.4L13.6 6L8.6 10.6" fill="none" stroke="#555" stroke-width="1.6"/></svg>
<svg style="left:1062px;top:393px;" width="43" height="29" viewBox="0 0 43 29"><g transform="translate(2,2)"><rect width="39" height="25" fill="#3d9ee0"/><path d="M0 13.750000000000002L8.58 7.5L16.38 14.499999999999998Z" fill="#e8eef2"/><ellipse cx="24.18" cy="5.0" rx="3.9000000000000004" ry="2.0" fill="#fff"/><circle cx="27.299999999999997" cy="4.0" r="1.7500000000000002" fill="#f4e04c"/><rect y="14.000000000000002" width="39" height="11.0" fill="#6cc230"/><ellipse cx="23.4" cy="17.0" rx="11.7" ry="2.25" fill="#9a5a28"/><circle cx="33.54" cy="12.5" r="3.25" fill="#2f8c2c"/><circle cx="4.68" cy="15.0" r="2.0" fill="#2f8c2c"/><circle cx="25.740000000000002" cy="15.0" r="1.25" fill="#d43a2a"/></g><rect x="1" y="1" width="41" height="27" fill="none" stroke="#e0431f" stroke-width="1.1"/><rect x="4" y="4" width="35" height="21" fill="none" stroke="#111" stroke-width="1.1"/></svg>
<svg style="left:875px;top:407px;" width="50" height="30" viewBox="0 0 50 30"><path d="M1 15.4L13.4 3.2V10.4H19.4V20.4H13.4V27.6Z M49 15.4L36.6 3.2V10.4H30.6V20.4H36.6V27.6Z" fill="#60605e"/><path d="M21.7 10.4V20.4M25 10.4V20.4M28.3 10.4V20.4" stroke="#60605e" stroke-width="1.5"/></svg>
<span style="left:663.00px;top:522.79px;font-size:12.3px;color:#2c2c2c;letter-spacing:-0.056px;">Auswahl der Dateiformate:</span>
<div style="left:662px;top:549px;width:12px;height:11px;background:linear-gradient(#5e5e5e,#4e4e4e);border:1px solid #2c2c2c;border-radius:1px"></div>
<svg style="left:661px;top:545px;" width="16" height="16" viewBox="0 0 16 16"><path d="M3.4 8.6L6.2 12.4L12.6 2.6" fill="none" stroke="#f2f2f2" stroke-width="1.5"/></svg>
<span style="left:677.00px;top:549.36px;font-size:12.8px;color:#ececec;letter-spacing:-0.126px;">jpg</span>
<div style="left:710px;top:549px;width:12px;height:11px;background:linear-gradient(#5e5e5e,#4e4e4e);border:1px solid #2c2c2c;border-radius:1px"></div>
<svg style="left:709px;top:545px;" width="16" height="16" viewBox="0 0 16 16"><path d="M3.4 8.6L6.2 12.4L12.6 2.6" fill="none" stroke="#f2f2f2" stroke-width="1.5"/></svg>
<span style="left:726.00px;top:549.36px;font-size:12.8px;color:#ececec;letter-spacing:-0.120px;">png</span>
<div style="left:764px;top:549px;width:12px;height:11px;background:linear-gradient(#5e5e5e,#4e4e4e);border:1px solid #2c2c2c;border-radius:1px"></div>
<svg style="left:763px;top:545px;" width="16" height="16" viewBox="0 0 16 16"><path d="M3.4 8.6L6.2 12.4L12.6 2.6" fill="none" stroke="#f2f2f2" stroke-width="1.5"/></svg>
<span style="left:780.40px;top:549.36px;font-size:12.8px;color:#ececec;letter-spacing:0.010px;">tif</span>
<div style="left:807px;top:549px;width:12px;height:11px;background:linear-gradient(#5e5e5e,#4e4e4e);border:1px solid #2c2c2c;border-radius:1px"></div>
<svg style="left:806px;top:545px;" width="16" height="16" viewBox="0 0 16 16"><path d="M3.4 8.6L6.2 12.4L12.6 2.6" fill="none" stroke="#f2f2f2" stroke-width="1.5"/></svg>
<span style="left:823.00px;top:549.36px;font-size:12.8px;color:#ececec;letter-spacing:-0.080px;">psd</span>
<div style="left:860px;top:549px;width:12px;height:11px;background:linear-gradient(#5e5e5e,#4e4e4e);border:1px solid #2c2c2c;border-radius:1px"></div>
<span style="left:876.00px;top:549.36px;font-size:12.8px;color:#ececec;letter-spacing:0.068px;">pdf</span>
<div style="left:911px;top:549px;width:12px;height:11px;background:linear-gradient(#5e5e5e,#4e4e4e);border:1px solid #2c2c2c;border-radius:1px"></div>
<span style="left:927.00px;top:549.36px;font-size:12.8px;color:#ececec;letter-spacing:-0.201px;">indd</span>
<div style="left:967px;top:549px;width:12px;height:11px;background:linear-gradient(#5e5e5e,#4e4e4e);border:1px solid #2c2c2c;border-radius:1px"></div>
<span style="left:983.00px;top:549.36px;font-size:12.8px;color:#ececec;letter-spacing:-0.184px;">ai</span>
<span style="left:662.60px;top:596.59px;font-size:12.3px;color:#2c2c2c;letter-spacing:-0.099px;">Mehrseitige Dateien:</span>
<span style="left:798.00px;top:596.59px;font-size:12.3px;color:#2c2c2c;letter-spacing:-0.076px;">Dateien sortieren nach:</span>
<svg style="left:664px;top:621px;" width="12" height="15" viewBox="0 0 12 15"><path d="M1 1H6.6L10.6 5V14H1Z" fill="#f2f2f2"/><path d="M6.6 1V5H10.6Z" fill="#4b4b4b"/><path d="M6.6 1.2L10.4 5" stroke="#f2f2f2" stroke-width=".8"/></svg>
<svg style="left:691px;top:621px;" width="30" height="15" viewBox="0 0 30 15"><g transform="translate(0.0,0)"><path d="M1 1H5.4L9 4.6V14H1Z" fill="#f2f2f2"/><path d="M5.4 1V4.6H9Z" fill="#4b4b4b"/></g><g transform="translate(9.4,0)"><path d="M1 1H5.4L9 4.6V14H1Z" fill="#f2f2f2"/><path d="M5.4 1V4.6H9Z" fill="#4b4b4b"/></g><g transform="translate(18.8,0)"><path d="M1 1H5.4L9 4.6V14H1Z" fill="#f2f2f2"/><path d="M5.4 1V4.6H9Z" fill="#4b4b4b"/></g></svg>
<svg style="left:663px;top:644px;" width="12" height="5" viewBox="0 0 12 5"><path d="M1.5 4.2L6 0.8L10.5 4.2Z" fill="#6a6a6a"/></svg>
<span style="left:798.50px;top:618.22px;font-size:21px;color:#5e5e5e;font-weight:bold;letter-spacing:-2.172px;">A</span>
<svg style="left:810px;top:630.5px;" width="8" height="6" viewBox="0 0 8 6"><path d="M0.8 0.8H7.2L4 5.2Z" fill="#f0f0f0"/></svg>
<span style="left:829.50px;top:618.22px;font-size:21px;color:#5e5e5e;font-weight:bold;letter-spacing:0.172px;">Z</span>
<svg style="left:840px;top:630.5px;" width="8" height="6" viewBox="0 0 8 6"><path d="M0.8 0.8H7.2L4 5.2Z" fill="#f0f0f0"/></svg>
<svg style="left:859px;top:620px;" width="18" height="18" viewBox="0 0 18 18"><circle cx="8" cy="9" r="6.4" fill="none" stroke="#5e5e5e" stroke-width="2.2"/><path d="M8 4.5V9H12.5" fill="none" stroke="#5e5e5e" stroke-width="2"/></svg>
<svg style="left:871px;top:630.5px;" width="8" height="6" viewBox="0 0 8 6"><path d="M0.8 0.8H7.2L4 5.2Z" fill="#f0f0f0"/></svg>
<svg style="left:893px;top:621px;" width="20" height="18" viewBox="0 0 20 18"><circle cx="10.4" cy="9.4" r="6.4" fill="none" stroke="#5e5e5e" stroke-width="2.2"/><path d="M10.4 5V9.4H14.6" fill="none" stroke="#5e5e5e" stroke-width="2"/><rect x="0" y="0" width="8" height="8" fill="#4b4b4b"/></svg>
<svg style="left:891px;top:621.5px;" width="8" height="6" viewBox="0 0 8 6"><path d="M0.8 5.2H7.2L4 0.8Z" fill="#f0f0f0"/></svg>
<svg style="left:923px;top:620px;" width="18" height="19" viewBox="0 0 18 19"><path d="M13 1.6A4 4 0 0 0 9 7L1.6 14.6L3.8 16.8L11.2 9.4A4 4 0 0 0 16.4 5L13.8 7.4L11.2 5Z" fill="#5e5e5e"/></svg>
<svg style="left:933px;top:632.5px;" width="8" height="6" viewBox="0 0 8 6"><path d="M0.8 0.8H7.2L4 5.2Z" fill="#f0f0f0"/></svg>
<svg style="left:956px;top:620px;" width="18" height="19" viewBox="0 0 18 19"><path d="M13 1.6A4 4 0 0 0 9 7L1.6 14.6L3.8 16.8L11.2 9.4A4 4 0 0 0 16.4 5L13.8 7.4L11.2 5Z" fill="#5e5e5e"/><rect x="0" y="0" width="6.5" height="7" fill="#4b4b4b"/></svg>
<svg style="left:954px;top:620.5px;" width="8" height="6" viewBox="0 0 8 6"><path d="M0.8 5.2H7.2L4 0.8Z" fill="#f0f0f0"/></svg>
<svg style="left:987px;top:622px;" width="14" height="14" viewBox="0 0 14 14"><rect x="1" y="1" width="11.4" height="11.8" rx="1" fill="#f4f4f4"/><circle cx="4.4" cy="4.2" r="1.5" fill="#4b4b4b"/><circle cx="8.8" cy="4.8" r="1.2" fill="#4b4b4b"/><circle cx="8.6" cy="9.2" r="1.5" fill="#4b4b4b"/></svg>
<div style="left:1066px;top:612px;width:86px;height:25px;background:linear-gradient(#5f5f5f,#565656);border:1px solid #2a2a2a;border-radius:1px;box-shadow:inset 0 1px 0 #6c6c6c, inset 1px 0 0 #626262, inset -1px 0 0 #626262"></div>
<span style="left:608.50px;width:1000px;text-align:center;top:620.29px;font-size:12.3px;color:#f2f2f2;letter-spacing:0.013px;">Abbrechen</span>
<div style="left:57px;top:967px;width:468px;height:16px;background:#464646;"></div>
<div style="left:525px;top:967px;width:1212px;height:16px;background:#303030;"></div>
<div style="left:833px;top:968px;width:573px;height:15px;background:#8c8c8c;"></div>
<div style="left:1713px;top:967px;width:39px;height:16px;background:#444444;"></div>
<div style="left:57px;top:967px;width:1656px;height:1px;background:#2a2a2a;"></div>
<svg style="left:74px;top:969px;" width="21" height="12" viewBox="0 0 21 12"><rect x="0.5" y="0.5" width="19.5" height="10.5" rx="2.5" fill="#c9c9c9"/><circle cx="6" cy="5.8" r="2.6" fill="none" stroke="#2a2a2a" stroke-width="2.4" stroke-dasharray="1.6 1.1"/><circle cx="6" cy="5.8" r="1.8" fill="#2a2a2a"/><circle cx="6" cy="5.8" r=".8" fill="#c9c9c9"/><path d="M11 4.2H16.5M17.8 7.6H12.4" stroke="#2a2a2a" stroke-width="1.3"/><path d="M15.4 2L18.6 4.2L15.4 6.4Z M13.6 5.4L10.4 7.6L13.6 9.8Z" fill="#2a2a2a"/></svg>
<svg style="left:101px;top:969px;" width="15" height="12" viewBox="0 0 15 12"><path d="M6 2.5H1.5V10.5H10.5V8" fill="none" stroke="#d8d8d8" stroke-width="1.3"/><path d="M4.6 8.4C5 5 7 3.8 9.6 3.8V1.2L13.8 4.8L9.6 8.4V6C7.4 6 6 6.6 4.6 8.4Z" fill="#d8d8d8"/></svg>
<svg style="left:123px;top:970px;" width="10" height="11" viewBox="0 0 10 11"><path d="M1.8 0.8V10.2" stroke="#777" stroke-width="1.4"/><path d="M8.6 0.8V10.2L3 5.5Z" fill="#777"/></svg>
<svg style="left:139px;top:970px;" width="8" height="11" viewBox="0 0 8 11"><path d="M6.8 0.8V10.2L1.2 5.5Z" fill="#777"/></svg>
<span style="left:155.40px;top:971.76px;font-size:9.5px;color:#e4e4e4;">1</span>
<svg style="left:237px;top:972px;" width="9" height="7" viewBox="0 0 9 7"><path d="M0.8 0.8H8.2L4.5 6Z" fill="#e0e0e0"/></svg>
<svg style="left:254px;top:970px;" width="8" height="11" viewBox="0 0 8 11"><path d="M1.2 0.8V10.2L6.8 5.5Z" fill="#777"/></svg>
<svg style="left:268px;top:970px;" width="10" height="11" viewBox="0 0 10 11"><path d="M8.2 0.8V10.2" stroke="#777" stroke-width="1.4"/><path d="M1.4 0.8V10.2L7 5.5Z" fill="#777"/></svg>
<svg style="left:283px;top:968px;" width="19" height="15" viewBox="0 0 19 15"><circle cx="7" cy="7.5" r="6.2" fill="#3a3a3a" stroke="#e8e8e8" stroke-width="1.5"/><path d="M4.6 3.8H8L10 5.8V10.6H4.6Z" fill="none" stroke="#e8e8e8" stroke-width="1.1"/><path d="M7.8 3.8V6H10" fill="none" stroke="#e8e8e8" stroke-width="1"/><path d="M14.6 11H18L16.3 13.2Z" fill="#e0e0e0"/></svg>
<span style="left:310.00px;top:971.66px;font-size:9.5px;color:#6c6c6c;letter-spacing:-0.125px;">[Grundprofil] (Arbeitsp...</span>
<svg style="left:414px;top:972px;" width="9" height="7" viewBox="0 0 9 7"><path d="M0.8 0.8H8.2L4.5 6Z" fill="#5e5e5e"/></svg>
<svg style="left:429px;top:969px;" width="12" height="12" viewBox="0 0 12 12"><circle cx="5.8" cy="6" r="5" fill="#686868"/></svg>
<span style="left:444.00px;top:971.66px;font-size:9.5px;color:#e8e8e8;letter-spacing:-0.155px;">Preflight aus</span>
<svg style="left:515px;top:973px;" width="7" height="5" viewBox="0 0 7 5"><path d="M0.5 0.6H6.5L3.5 4.4Z" fill="#e0e0e0"/></svg>
<svg style="left:530px;top:970px;" width="7" height="11" viewBox="0 0 7 11"><path d="M6.2 0.8V10.2L0.8 5.5Z" fill="#f0f0f0"/></svg>
<svg style="left:1702px;top:970px;" width="7" height="11" viewBox="0 0 7 11"><path d="M0.8 0.8V10.2L6.2 5.5Z" fill="#f0f0f0"/></svg>
<svg style="left:1718px;top:969px;" width="17" height="13" viewBox="0 0 17 13"><rect x="1.2" y="1.2" width="14" height="10.4" fill="#2a2a2a" stroke="#e8e8e8" stroke-width="1.2"/><path d="M8.2 1.2V11.6" stroke="#e8e8e8" stroke-width="1.2"/></svg>
<svg style="left:1740px;top:970px;" width="11" height="11" viewBox="0 0 11 11"><g fill="#e4e4e4"><rect x="9" y="1" width="1" height="1"/><rect x="9" y="3" width="1" height="1"/><rect x="7" y="3" width="1" height="1"/><rect x="9" y="5" width="1" height="1"/><rect x="7" y="5" width="1" height="1"/><rect x="5" y="5" width="1" height="1"/><rect x="9" y="7" width="1" height="1"/><rect x="7" y="7" width="1" height="1"/><rect x="5" y="7" width="1" height="1"/><rect x="3" y="7" width="1" height="1"/><rect x="9" y="9" width="1" height="1"/><rect x="7" y="9" width="1" height="1"/><rect x="5" y="9" width="1" height="1"/><rect x="3" y="9" width="1" height="1"/><rect x="1" y="9" width="1" height="1"/></g></svg>
<svg style="left:1739px;top:108px;" width="10" height="7" viewBox="0 0 10 7"><path d="M0.8 6.3L5 1L9.2 6.3Z" fill="#f0f0f0"/></svg>
<svg style="left:1739px;top:956px;" width="10" height="7" viewBox="0 0 10 7"><path d="M0.8 0.8L5 6.2L9.2 0.8Z" fill="#f0f0f0"/></svg>
<svg style="left:58px;top:619px;" width="15" height="3" viewBox="0 0 15 3"><path d="M0 1.5H15" stroke="#d0d0d0" stroke-width="1" stroke-dasharray="1 1"/></svg>
<svg style="left:1695px;top:104px;" width="3" height="15" viewBox="0 0 3 15"><path d="M1.5 0V15" stroke="#d0d0d0" stroke-width="1" stroke-dasharray="1 1"/></svg>
</div></body></html>
